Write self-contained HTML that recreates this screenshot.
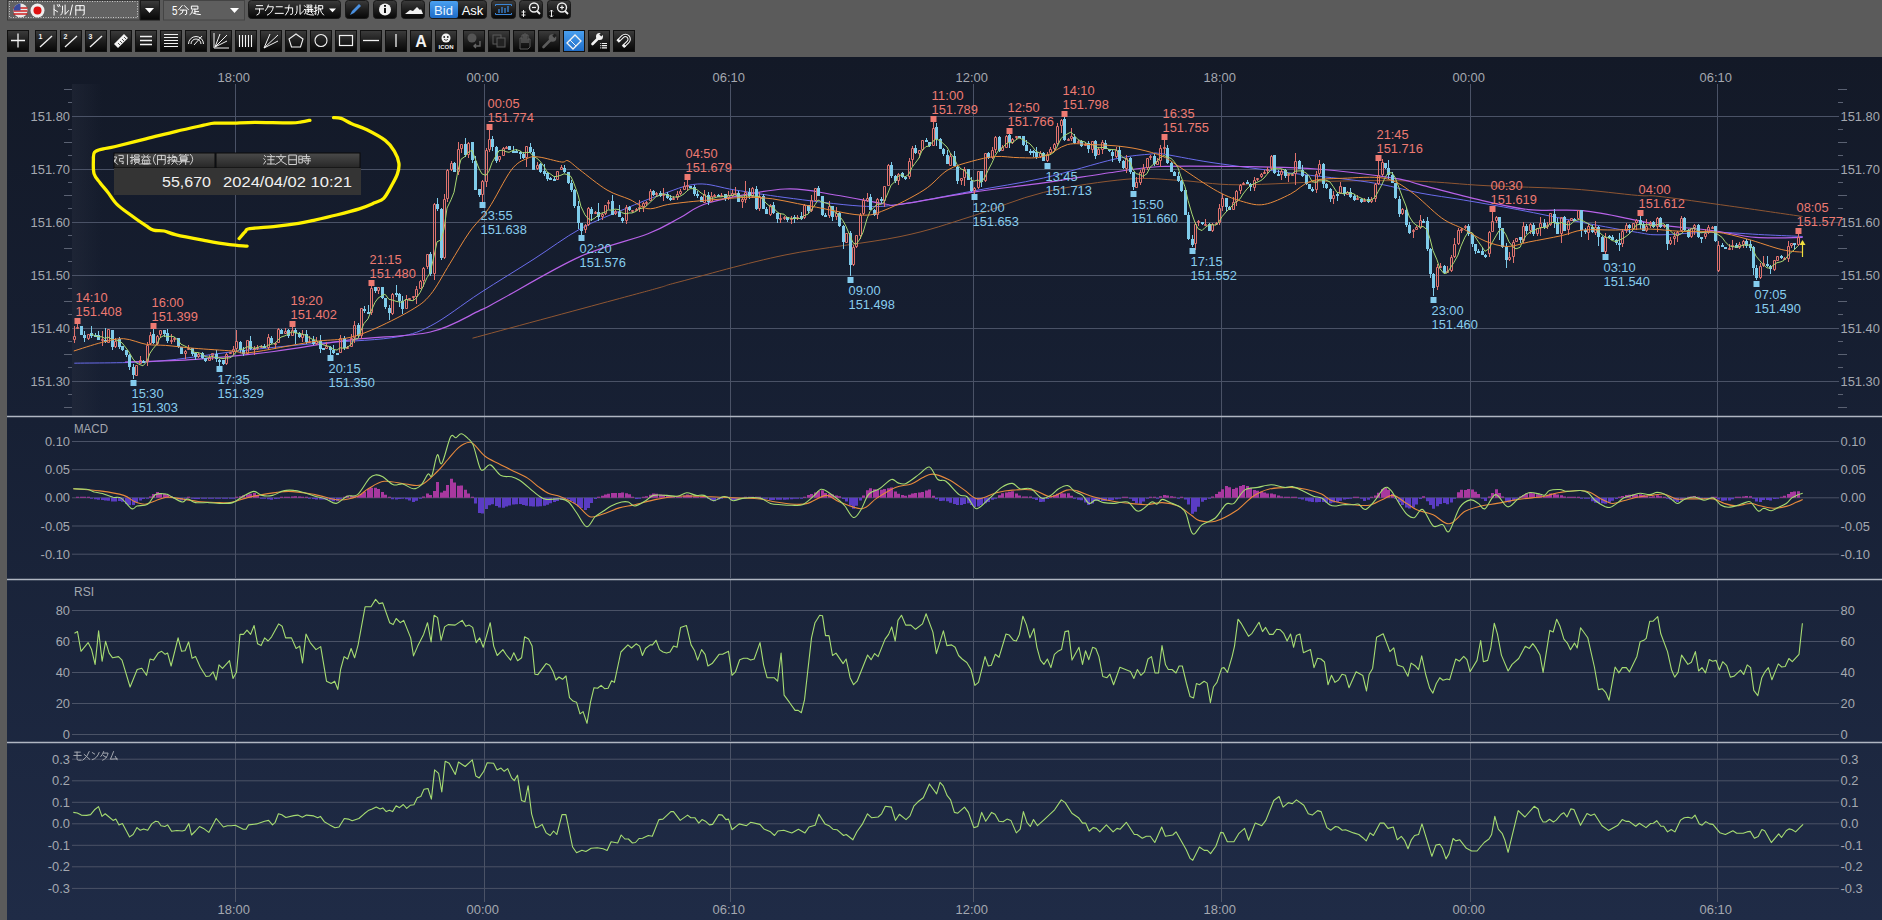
<!DOCTYPE html><html><head><meta charset="utf-8"><style>
html,body{margin:0;padding:0;width:1882px;height:920px;overflow:hidden;background:#5b5b5b;font-family:'Liberation Sans', sans-serif;}
svg{position:absolute;left:0;top:0;display:block}
</style></head><body>
<svg width="1882" height="920" viewBox="0 0 1882 920" font-family="'Liberation Sans', sans-serif">
<defs>
<linearGradient id="bg" x1="0" y1="57" x2="0" y2="920" gradientUnits="userSpaceOnUse">
<stop offset="0" stop-color="#131927"/><stop offset="0.42" stop-color="#172034"/><stop offset="1" stop-color="#1f2b46"/></linearGradient>
<linearGradient id="btn" x1="0" y1="0" x2="0" y2="1"><stop offset="0" stop-color="#3c3c3c"/><stop offset="0.5" stop-color="#1e1e1e"/><stop offset="1" stop-color="#060606"/></linearGradient>
<linearGradient id="btnb" x1="0" y1="0" x2="0" y2="1"><stop offset="0" stop-color="#4aa0f0"/><stop offset="1" stop-color="#1e6cc8"/></linearGradient>
<linearGradient id="hdr" x1="0" y1="0" x2="0" y2="1"><stop offset="0" stop-color="#4a4a4a"/><stop offset="1" stop-color="#262626"/></linearGradient>
<linearGradient id="dim" x1="0" y1="0" x2="1" y2="0"><stop offset="0" stop-color="#2a3040" stop-opacity="0.4"/><stop offset="1" stop-color="#2a3040" stop-opacity="0"/></linearGradient>
</defs>

<rect x="0" y="0" width="1882" height="57" fill="#5b5b5b"/>
<rect x="0" y="57" width="7" height="863" fill="#5b5b5b"/>
<rect x="7" y="57" width="1875" height="863" fill="url(#bg)"/>
<rect x="72" y="84" width="30" height="332" fill="url(#dim)"/>
<path d="M72,116.5H1839 M72,169.5H1839 M72,222.5H1839 M72,275.5H1839 M72,328.5H1839 M72,381.5H1839 M235.5,84V416 M484.5,84V416 M730.5,84V416 M973.5,84V416 M1221.5,84V416 M1470.5,84V416 M1717.5,84V416 M72,441.5H1839 M72,469.7H1839 M72,497.8H1839 M72,526.0H1839 M72,554.2H1839 M72,610.5H1839 M72,641.5H1839 M72,672.5H1839 M72,703.5H1839 M72,734.5H1839 M72,759.2H1839 M72,780.8H1839 M72,802.3H1839 M72,823.8H1839 M72,845.3H1839 M72,866.8H1839 M72,888.4H1839 M235.5,417V578 M235.5,580V741 M235.5,743V902 M484.5,417V578 M484.5,580V741 M484.5,743V902 M730.5,417V578 M730.5,580V741 M730.5,743V902 M973.5,417V578 M973.5,580V741 M973.5,743V902 M1221.5,417V578 M1221.5,580V741 M1221.5,743V902 M1470.5,417V578 M1470.5,580V741 M1470.5,743V902 M1717.5,417V578 M1717.5,580V741 M1717.5,743V902" stroke="#4a5266" stroke-width="1" fill="none"/>
<path d="M64,89.5H72 M1838,89.5H1847 M68,102.5H72 M1838,102.5H1843 M68,129.5H72 M1838,129.5H1843 M64,142.5H72 M1838,142.5H1847 M68,155.5H72 M1838,155.5H1843 M68,182.5H72 M1838,182.5H1843 M64,195.5H72 M1838,195.5H1847 M68,208.5H72 M1838,208.5H1843 M68,235.5H72 M1838,235.5H1843 M64,248.5H72 M1838,248.5H1847 M68,261.5H72 M1838,261.5H1843 M68,288.5H72 M1838,288.5H1843 M64,301.5H72 M1838,301.5H1847 M68,314.5H72 M1838,314.5H1843 M68,341.5H72 M1838,341.5H1843 M64,354.5H72 M1838,354.5H1847 M68,367.5H72 M1838,367.5H1843 M68,394.5H72 M1838,394.5H1843 M64,407.5H72 M1838,407.5H1847" stroke="#5a6172" stroke-width="1" fill="none"/>
<path d="M7,416.5H1882 M7,579.5H1882 M7,742.5H1882" stroke="#b0b6c2" stroke-width="1.3" fill="none"/>
<text x="70" y="120.5" text-anchor="end" fill="#a4a8b0" font-size="12" textLength="39.4" lengthAdjust="spacingAndGlyphs" >151.80</text>
<text x="1840.5" y="120.5" text-anchor="start" fill="#a4a8b0" font-size="12" textLength="39.4" lengthAdjust="spacingAndGlyphs" >151.80</text>
<text x="70" y="173.5" text-anchor="end" fill="#a4a8b0" font-size="12" textLength="39.4" lengthAdjust="spacingAndGlyphs" >151.70</text>
<text x="1840.5" y="173.5" text-anchor="start" fill="#a4a8b0" font-size="12" textLength="39.4" lengthAdjust="spacingAndGlyphs" >151.70</text>
<text x="70" y="226.5" text-anchor="end" fill="#a4a8b0" font-size="12" textLength="39.4" lengthAdjust="spacingAndGlyphs" >151.60</text>
<text x="1840.5" y="226.5" text-anchor="start" fill="#a4a8b0" font-size="12" textLength="39.4" lengthAdjust="spacingAndGlyphs" >151.60</text>
<text x="70" y="279.5" text-anchor="end" fill="#a4a8b0" font-size="12" textLength="39.4" lengthAdjust="spacingAndGlyphs" >151.50</text>
<text x="1840.5" y="279.5" text-anchor="start" fill="#a4a8b0" font-size="12" textLength="39.4" lengthAdjust="spacingAndGlyphs" >151.50</text>
<text x="70" y="332.5" text-anchor="end" fill="#a4a8b0" font-size="12" textLength="39.4" lengthAdjust="spacingAndGlyphs" >151.40</text>
<text x="1840.5" y="332.5" text-anchor="start" fill="#a4a8b0" font-size="12" textLength="39.4" lengthAdjust="spacingAndGlyphs" >151.40</text>
<text x="70" y="385.5" text-anchor="end" fill="#a4a8b0" font-size="12" textLength="39.4" lengthAdjust="spacingAndGlyphs" >151.30</text>
<text x="1840.5" y="385.5" text-anchor="start" fill="#a4a8b0" font-size="12" textLength="39.4" lengthAdjust="spacingAndGlyphs" >151.30</text>
<text x="70" y="446.0" text-anchor="end" fill="#a4a8b0" font-size="12" textLength="25.1" lengthAdjust="spacingAndGlyphs" >0.10</text>
<text x="1840.5" y="446.0" text-anchor="start" fill="#a4a8b0" font-size="12" textLength="25.1" lengthAdjust="spacingAndGlyphs" >0.10</text>
<text x="70" y="474.2" text-anchor="end" fill="#a4a8b0" font-size="12" textLength="25.1" lengthAdjust="spacingAndGlyphs" >0.05</text>
<text x="1840.5" y="474.2" text-anchor="start" fill="#a4a8b0" font-size="12" textLength="25.1" lengthAdjust="spacingAndGlyphs" >0.05</text>
<text x="70" y="502.3" text-anchor="end" fill="#a4a8b0" font-size="12" textLength="25.1" lengthAdjust="spacingAndGlyphs" >0.00</text>
<text x="1840.5" y="502.3" text-anchor="start" fill="#a4a8b0" font-size="12" textLength="25.1" lengthAdjust="spacingAndGlyphs" >0.00</text>
<text x="70" y="530.5" text-anchor="end" fill="#a4a8b0" font-size="12" textLength="29.4" lengthAdjust="spacingAndGlyphs" >-0.05</text>
<text x="1840.5" y="530.5" text-anchor="start" fill="#a4a8b0" font-size="12" textLength="29.4" lengthAdjust="spacingAndGlyphs" >-0.05</text>
<text x="70" y="558.7" text-anchor="end" fill="#a4a8b0" font-size="12" textLength="29.4" lengthAdjust="spacingAndGlyphs" >-0.10</text>
<text x="1840.5" y="558.7" text-anchor="start" fill="#a4a8b0" font-size="12" textLength="29.4" lengthAdjust="spacingAndGlyphs" >-0.10</text>
<text x="70" y="614.5" text-anchor="end" fill="#a4a8b0" font-size="12" textLength="14.3" lengthAdjust="spacingAndGlyphs" >80</text>
<text x="1840.5" y="614.5" text-anchor="start" fill="#a4a8b0" font-size="12" textLength="14.3" lengthAdjust="spacingAndGlyphs" >80</text>
<text x="70" y="645.5" text-anchor="end" fill="#a4a8b0" font-size="12" textLength="14.3" lengthAdjust="spacingAndGlyphs" >60</text>
<text x="1840.5" y="645.5" text-anchor="start" fill="#a4a8b0" font-size="12" textLength="14.3" lengthAdjust="spacingAndGlyphs" >60</text>
<text x="70" y="676.5" text-anchor="end" fill="#a4a8b0" font-size="12" textLength="14.3" lengthAdjust="spacingAndGlyphs" >40</text>
<text x="1840.5" y="676.5" text-anchor="start" fill="#a4a8b0" font-size="12" textLength="14.3" lengthAdjust="spacingAndGlyphs" >40</text>
<text x="70" y="707.5" text-anchor="end" fill="#a4a8b0" font-size="12" textLength="14.3" lengthAdjust="spacingAndGlyphs" >20</text>
<text x="1840.5" y="707.5" text-anchor="start" fill="#a4a8b0" font-size="12" textLength="14.3" lengthAdjust="spacingAndGlyphs" >20</text>
<text x="70" y="738.5" text-anchor="end" fill="#a4a8b0" font-size="12" textLength="7.2" lengthAdjust="spacingAndGlyphs" >0</text>
<text x="1840.5" y="738.5" text-anchor="start" fill="#a4a8b0" font-size="12" textLength="7.2" lengthAdjust="spacingAndGlyphs" >0</text>
<text x="70" y="763.7" text-anchor="end" fill="#a4a8b0" font-size="12" textLength="17.9" lengthAdjust="spacingAndGlyphs" >0.3</text>
<text x="1840.5" y="763.7" text-anchor="start" fill="#a4a8b0" font-size="12" textLength="17.9" lengthAdjust="spacingAndGlyphs" >0.3</text>
<text x="70" y="785.3" text-anchor="end" fill="#a4a8b0" font-size="12" textLength="17.9" lengthAdjust="spacingAndGlyphs" >0.2</text>
<text x="1840.5" y="785.3" text-anchor="start" fill="#a4a8b0" font-size="12" textLength="17.9" lengthAdjust="spacingAndGlyphs" >0.2</text>
<text x="70" y="806.8" text-anchor="end" fill="#a4a8b0" font-size="12" textLength="17.9" lengthAdjust="spacingAndGlyphs" >0.1</text>
<text x="1840.5" y="806.8" text-anchor="start" fill="#a4a8b0" font-size="12" textLength="17.9" lengthAdjust="spacingAndGlyphs" >0.1</text>
<text x="70" y="828.3" text-anchor="end" fill="#a4a8b0" font-size="12" textLength="17.9" lengthAdjust="spacingAndGlyphs" >0.0</text>
<text x="1840.5" y="828.3" text-anchor="start" fill="#a4a8b0" font-size="12" textLength="17.9" lengthAdjust="spacingAndGlyphs" >0.0</text>
<text x="70" y="849.8" text-anchor="end" fill="#a4a8b0" font-size="12" textLength="22.2" lengthAdjust="spacingAndGlyphs" >-0.1</text>
<text x="1840.5" y="849.8" text-anchor="start" fill="#a4a8b0" font-size="12" textLength="22.2" lengthAdjust="spacingAndGlyphs" >-0.1</text>
<text x="70" y="871.3" text-anchor="end" fill="#a4a8b0" font-size="12" textLength="22.2" lengthAdjust="spacingAndGlyphs" >-0.2</text>
<text x="1840.5" y="871.3" text-anchor="start" fill="#a4a8b0" font-size="12" textLength="22.2" lengthAdjust="spacingAndGlyphs" >-0.2</text>
<text x="70" y="892.9" text-anchor="end" fill="#a4a8b0" font-size="12" textLength="22.2" lengthAdjust="spacingAndGlyphs" >-0.3</text>
<text x="1840.5" y="892.9" text-anchor="start" fill="#a4a8b0" font-size="12" textLength="22.2" lengthAdjust="spacingAndGlyphs" >-0.3</text>
<text x="233.7" y="81.5" text-anchor="middle" fill="#a4a8b0" font-size="12" textLength="32.3" lengthAdjust="spacingAndGlyphs" >18:00</text>
<text x="233.7" y="913.5" text-anchor="middle" fill="#a4a8b0" font-size="12" textLength="32.3" lengthAdjust="spacingAndGlyphs" >18:00</text>
<text x="482.7" y="81.5" text-anchor="middle" fill="#a4a8b0" font-size="12" textLength="32.3" lengthAdjust="spacingAndGlyphs" >00:00</text>
<text x="482.7" y="913.5" text-anchor="middle" fill="#a4a8b0" font-size="12" textLength="32.3" lengthAdjust="spacingAndGlyphs" >00:00</text>
<text x="728.7" y="81.5" text-anchor="middle" fill="#a4a8b0" font-size="12" textLength="32.3" lengthAdjust="spacingAndGlyphs" >06:10</text>
<text x="728.7" y="913.5" text-anchor="middle" fill="#a4a8b0" font-size="12" textLength="32.3" lengthAdjust="spacingAndGlyphs" >06:10</text>
<text x="971.7" y="81.5" text-anchor="middle" fill="#a4a8b0" font-size="12" textLength="32.3" lengthAdjust="spacingAndGlyphs" >12:00</text>
<text x="971.7" y="913.5" text-anchor="middle" fill="#a4a8b0" font-size="12" textLength="32.3" lengthAdjust="spacingAndGlyphs" >12:00</text>
<text x="1219.7" y="81.5" text-anchor="middle" fill="#a4a8b0" font-size="12" textLength="32.3" lengthAdjust="spacingAndGlyphs" >18:00</text>
<text x="1219.7" y="913.5" text-anchor="middle" fill="#a4a8b0" font-size="12" textLength="32.3" lengthAdjust="spacingAndGlyphs" >18:00</text>
<text x="1468.7" y="81.5" text-anchor="middle" fill="#a4a8b0" font-size="12" textLength="32.3" lengthAdjust="spacingAndGlyphs" >00:00</text>
<text x="1468.7" y="913.5" text-anchor="middle" fill="#a4a8b0" font-size="12" textLength="32.3" lengthAdjust="spacingAndGlyphs" >00:00</text>
<text x="1715.7" y="81.5" text-anchor="middle" fill="#a4a8b0" font-size="12" textLength="32.3" lengthAdjust="spacingAndGlyphs" >06:10</text>
<text x="1715.7" y="913.5" text-anchor="middle" fill="#a4a8b0" font-size="12" textLength="32.3" lengthAdjust="spacingAndGlyphs" >06:10</text>
<text x="74" y="433" fill="#a4a8b0" font-size="12" textLength="34" lengthAdjust="spacingAndGlyphs">MACD</text><text x="74" y="596" fill="#a4a8b0" font-size="12" textLength="20" lengthAdjust="spacingAndGlyphs">RSI</text>
<g fill="none" stroke="#a4a8b0" stroke-width="1.0" stroke-linecap="square" ><path transform="translate(73.00,750.70) scale(0.900,0.950)" d="M2,1.5H8 M1,5H9 M4.5,1.5V8.5Q4.5,10 6,10H9" vector-effect="non-scaling-stroke"/><path transform="translate(82.00,750.70) scale(0.900,0.950)" d="M8,1Q6,7 1,10 M2.5,4L8.5,9" vector-effect="non-scaling-stroke"/><path transform="translate(91.00,750.70) scale(0.900,0.950)" d="M1.5,2L4,3.5 M1.5,9.5Q7,8 9,2" vector-effect="non-scaling-stroke"/><path transform="translate(100.00,750.70) scale(0.900,0.950)" d="M4,1Q3,4 1,6 M4,2.5H9Q8,8 3,10 M3.5,5L7,7" vector-effect="non-scaling-stroke"/><path transform="translate(109.00,750.70) scale(0.900,0.950)" d="M5,1Q3,6 1.5,9L9,8.5 M7,6L9,9.5" vector-effect="non-scaling-stroke"/></g>
<path d="M472.5,338.2 C496.1,331.8 582.8,308.4 614.0,300.0 C645.2,291.6 649.0,290.6 660.0,287.5 C671.0,284.4 659.2,287.1 680.0,281.7 C700.8,276.3 748.3,262.5 785.0,255.0 C821.7,247.5 868.9,243.0 900.0,236.6 C931.1,230.2 947.8,223.7 971.7,216.3 C995.6,208.9 1017.6,198.6 1043.5,192.4 C1069.4,186.2 1104.2,181.2 1127.0,179.2 C1149.8,177.2 1161.5,179.5 1180.0,180.4 C1198.5,181.3 1210.9,184.7 1238.0,184.8 C1265.1,184.9 1312.4,181.6 1342.7,181.0 C1373.0,180.4 1396.3,180.5 1420.0,181.3 C1443.7,182.1 1459.7,184.3 1485.0,185.6 C1510.3,186.9 1546.6,187.4 1572.0,189.0 C1597.4,190.6 1622.7,194.2 1637.4,195.4 C1652.1,196.7 1644.6,194.7 1660.0,196.5 C1675.4,198.3 1705.8,202.7 1729.6,206.0 C1753.4,209.3 1790.5,214.8 1802.7,216.5" stroke="#8f5632" stroke-width="1.0" fill="none"/>
<path d="M74.3,363.2 C88.0,362.9 129.8,363.2 156.5,361.3 C183.2,359.4 208.6,354.4 234.7,351.5 C260.8,348.6 286.9,345.9 313.0,343.6 C339.1,341.3 371.6,340.7 391.2,337.8 C410.8,334.9 415.6,333.5 430.4,326.0 C445.2,318.5 462.7,304.2 480.0,293.0 C497.3,281.8 517.3,269.7 534.0,259.0 C550.7,248.3 564.8,237.4 580.0,229.0 C595.2,220.6 612.1,214.4 625.4,208.7 C638.7,203.0 648.0,199.1 660.0,195.0 C672.0,190.9 685.0,184.8 697.5,184.0 C710.0,183.2 720.4,187.8 735.0,190.0 C749.6,192.2 764.2,194.8 785.0,197.5 C805.8,200.2 840.8,204.9 860.0,206.0 C879.2,207.1 881.4,206.8 900.0,204.3 C918.6,201.8 947.8,195.6 971.7,191.2 C995.6,186.8 1019.6,183.4 1043.5,178.0 C1067.4,172.6 1097.1,163.0 1115.0,159.0 C1132.9,155.0 1143.5,154.9 1151.0,154.0 C1158.5,153.1 1149.8,152.1 1160.0,153.5 C1170.2,154.9 1190.2,159.3 1212.0,162.6 C1233.8,165.8 1264.4,169.7 1290.5,173.0 C1316.6,176.3 1347.2,178.9 1368.8,182.2 C1390.4,185.5 1404.2,190.0 1420.0,193.0 C1435.8,196.0 1447.2,197.2 1463.5,200.0 C1479.8,202.8 1497.9,205.8 1517.8,209.6 C1537.7,213.4 1563.1,218.8 1583.0,222.6 C1602.9,226.4 1624.6,230.4 1637.4,232.4 C1650.2,234.4 1647.6,234.8 1660.0,234.8 C1672.4,234.8 1694.6,232.2 1712.0,232.2 C1729.4,232.2 1749.3,234.1 1764.4,234.8 C1779.5,235.5 1796.3,236.2 1802.7,236.5" stroke="#6a6cec" stroke-width="1.0" fill="none"/>
<path d="M125.0,362.0 C136.8,361.6 170.8,361.1 195.6,359.3 C220.4,357.6 247.8,354.8 273.9,351.5 C300.0,348.2 325.9,342.9 352.0,339.7 C378.1,336.4 409.1,336.9 430.4,332.0 C451.7,327.1 468.4,315.7 480.0,310.4 C491.6,305.1 483.3,309.0 500.0,300.0 C516.7,291.0 555.3,267.6 580.0,256.6 C604.7,245.6 631.3,240.3 648.0,233.8 C664.7,227.3 669.7,223.0 680.0,217.8 C690.3,212.6 692.5,207.3 710.0,202.5 C727.5,197.7 764.2,190.2 785.0,189.0 C805.8,187.8 818.3,192.5 835.0,195.0 C851.7,197.5 874.2,202.4 885.0,204.0 C895.8,205.6 885.5,206.2 900.0,204.3 C914.5,202.4 947.8,196.0 971.7,192.4 C995.6,188.8 1019.6,186.2 1043.5,182.8 C1067.4,179.4 1095.6,174.7 1115.0,172.0 C1134.4,169.3 1139.5,167.4 1160.0,166.5 C1180.5,165.6 1211.9,166.1 1238.0,166.5 C1264.1,166.9 1290.4,167.0 1316.6,169.0 C1342.8,171.0 1377.8,175.7 1395.0,178.3 C1412.2,180.9 1406.8,181.2 1420.0,184.6 C1433.2,188.0 1456.2,194.5 1474.3,198.7 C1492.4,202.9 1510.6,207.6 1528.7,209.6 C1546.8,211.6 1564.9,208.9 1583.0,210.7 C1601.1,212.5 1624.6,218.0 1637.4,220.4 C1650.2,222.8 1647.6,223.5 1660.0,225.2 C1672.4,226.9 1696.0,228.5 1712.0,230.5 C1728.0,232.5 1740.6,236.2 1755.7,237.4 C1770.8,238.6 1794.9,237.4 1802.7,237.4" stroke="#b862e8" stroke-width="1.2" fill="none"/>
<path d="M77.5,324V327 M77.5,329V328 M88.5,334V334 M88.5,339V340 M102.5,331V339 M102.5,341V346 M108.5,329V329 M108.5,343V343 M115.5,338V341 M115.5,347V348 M136.5,365V365 M136.5,376V376 M140.5,356V360 M140.5,364V364 M147.5,342V345 M147.5,362V366 M150.5,332V335 M150.5,344V345 M157.5,335V336 M157.5,344V345 M160.5,330V330 M160.5,335V337 M171.5,334V340 M171.5,342V344 M174.5,337V338 M174.5,340V342 M185.5,350V351 M185.5,354V359 M188.5,345V348 M188.5,350V350 M198.5,353V354 M198.5,357V358 M209.5,355V357 M209.5,361V361 M212.5,353V353 M212.5,356V360 M226.5,353V354 M226.5,364V365 M230.5,352V352 M230.5,354V354 M233.5,346V349 M233.5,352V355 M236.5,330V341 M236.5,349V351 M247.5,340V340 M247.5,354V354 M254.5,346V348 M254.5,350V355 M257.5,345V347 M257.5,349V350 M261.5,345V346 M261.5,348V348 M268.5,334V337 M268.5,348V350 M275.5,342V343 M275.5,345V349 M278.5,328V329 M278.5,343V343 M285.5,328V331 M285.5,334V334 M292.5,327V330 M292.5,336V336 M302.5,330V334 M302.5,338V342 M309.5,336V341 M309.5,343V343 M316.5,337V341 M316.5,344V345 M326.5,342V346 M326.5,349V349 M340.5,335V338 M340.5,353V353 M347.5,346V347 M347.5,349V348 M351.5,334V338 M351.5,347V347 M354.5,321V325 M354.5,338V343 M361.5,308V308 M361.5,336V339 M371.5,286V288 M371.5,313V315 M378.5,287V287 M378.5,291V294 M392.5,293V294 M392.5,314V315 M406.5,295V299 M406.5,309V309 M409.5,298V298 M409.5,300V300 M413.5,296V296 M413.5,298V300 M416.5,286V289 M416.5,297V304 M420.5,280V281 M420.5,289V289 M423.5,267V268 M423.5,281V287 M427.5,254V254 M427.5,267V269 M434.5,203V204 M434.5,274V280 M444.5,194V199 M444.5,258V259 M447.5,169V170 M447.5,199V202 M451.5,161V163 M451.5,170V171 M458.5,142V149 M458.5,172V175 M461.5,144V144 M461.5,149V153 M468.5,142V143 M468.5,155V158 M482.5,180V181 M482.5,195V202 M486.5,148V150 M486.5,182V187 M489.5,130V139 M489.5,150V152 M499.5,156V156 M499.5,160V162 M503.5,147V148 M503.5,156V156 M506.5,146V147 M506.5,149V149 M526.5,146V146 M526.5,158V167 M537.5,162V165 M537.5,169V170 M557.5,171V171 M557.5,180V180 M561.5,165V167 M561.5,170V170 M585.5,224V225 M585.5,230V233 M588.5,207V208 M588.5,225V226 M595.5,211V212 M595.5,214V214 M602.5,213V214 M602.5,217V220 M605.5,205V205 M605.5,214V215 M608.5,200V202 M608.5,204V209 M615.5,210V211 M615.5,214V215 M626.5,205V207 M626.5,221V224 M632.5,210V210 M632.5,212V213 M636.5,208V209 M636.5,211V210 M639.5,200V207 M639.5,209V212 M643.5,202V203 M643.5,207V212 M646.5,201V202 M646.5,204V206 M650.5,189V191 M650.5,201V201 M656.5,192V193 M656.5,195V197 M663.5,188V194 M663.5,196V201 M673.5,196V198 M673.5,200V200 M677.5,191V194 M677.5,198V200 M680.5,189V191 M680.5,194V195 M684.5,182V186 M684.5,190V190 M687.5,180V185 M687.5,187V190 M704.5,190V194 M704.5,203V203 M711.5,192V196 M711.5,202V202 M714.5,194V195 M714.5,197V197 M721.5,193V195 M721.5,197V197 M728.5,191V195 M728.5,198V200 M732.5,190V193 M732.5,196V197 M735.5,187V193 M735.5,195V195 M742.5,197V199 M742.5,202V208 M745.5,181V192 M745.5,200V203 M752.5,187V188 M752.5,197V198 M759.5,192V196 M759.5,209V211 M770.5,204V205 M770.5,215V216 M780.5,213V218 M780.5,220V223 M784.5,216V217 M784.5,219V220 M791.5,216V218 M791.5,220V224 M797.5,215V217 M797.5,219V220 M804.5,204V205 M804.5,218V219 M811.5,195V200 M811.5,211V212 M815.5,188V188 M815.5,201V201 M829.5,201V206 M829.5,216V218 M836.5,207V213 M836.5,217V220 M846.5,233V233 M846.5,243V243 M853.5,245V247 M853.5,265V266 M856.5,235V235 M856.5,247V248 M860.5,213V215 M860.5,236V239 M863.5,198V200 M863.5,214V215 M867.5,193V198 M867.5,201V202 M877.5,198V199 M877.5,215V219 M884.5,186V186 M884.5,201V207 M888.5,164V165 M888.5,186V186 M898.5,173V174 M898.5,181V185 M909.5,158V161 M909.5,177V179 M912.5,146V148 M912.5,160V166 M919.5,150V150 M919.5,154V158 M922.5,140V140 M922.5,150V151 M933.5,122V128 M933.5,146V146 M950.5,153V156 M950.5,166V166 M961.5,178V178 M961.5,181V185 M964.5,167V169 M964.5,178V186 M974.5,187V188 M974.5,191V194 M978.5,171V171 M978.5,188V189 M985.5,153V153 M985.5,181V182 M992.5,147V150 M992.5,158V159 M995.5,136V137 M995.5,150V153 M1002.5,145V147 M1002.5,151V151 M1006.5,135V136 M1006.5,148V148 M1012.5,138V139 M1012.5,143V144 M1016.5,136V136 M1016.5,138V139 M1040.5,151V153 M1040.5,157V158 M1047.5,152V154 M1047.5,161V162 M1050.5,147V149 M1050.5,153V155 M1054.5,143V144 M1054.5,149V152 M1057.5,123V126 M1057.5,144V146 M1061.5,119V120 M1061.5,126V133 M1068.5,138V139 M1068.5,141V140 M1071.5,128V136 M1071.5,139V141 M1078.5,140V141 M1078.5,143V142 M1085.5,143V144 M1085.5,146V146 M1092.5,141V141 M1092.5,150V153 M1098.5,147V149 M1098.5,155V155 M1102.5,140V142 M1102.5,150V154 M1116.5,147V150 M1116.5,157V158 M1126.5,155V158 M1126.5,169V173 M1136.5,177V182 M1136.5,188V188 M1140.5,170V172 M1140.5,183V185 M1143.5,164V168 M1143.5,173V178 M1147.5,158V158 M1147.5,168V170 M1150.5,155V156 M1150.5,158V160 M1157.5,158V161 M1157.5,165V165 M1160.5,145V148 M1160.5,161V167 M1164.5,140V147 M1164.5,149V154 M1195.5,222V224 M1195.5,244V250 M1198.5,220V221 M1198.5,223V226 M1205.5,219V224 M1205.5,226V224 M1212.5,223V224 M1212.5,231V232 M1216.5,222V223 M1216.5,225V224 M1219.5,204V208 M1219.5,223V225 M1222.5,194V198 M1222.5,207V211 M1233.5,197V202 M1233.5,210V210 M1236.5,190V191 M1236.5,202V206 M1240.5,184V185 M1240.5,191V194 M1243.5,182V183 M1243.5,185V184 M1254.5,177V180 M1254.5,188V191 M1257.5,178V178 M1257.5,180V181 M1261.5,173V174 M1261.5,177V178 M1264.5,170V172 M1264.5,174V173 M1267.5,167V169 M1267.5,171V174 M1271.5,155V156 M1271.5,169V169 M1281.5,169V171 M1281.5,175V180 M1288.5,174V174 M1288.5,176V182 M1292.5,173V174 M1292.5,176V176 M1295.5,153V161 M1295.5,174V185 M1316.5,171V174 M1316.5,190V193 M1319.5,160V164 M1319.5,174V176 M1333.5,191V195 M1333.5,199V204 M1340.5,182V186 M1340.5,194V194 M1347.5,191V192 M1347.5,195V195 M1357.5,195V198 M1357.5,200V200 M1364.5,198V200 M1364.5,202V202 M1371.5,197V199 M1371.5,202V203 M1375.5,183V184 M1375.5,199V202 M1378.5,161V175 M1378.5,184V185 M1382.5,159V162 M1382.5,175V176 M1402.5,208V209 M1402.5,214V215 M1413.5,229V230 M1413.5,232V238 M1416.5,226V227 M1416.5,230V230 M1420.5,215V220 M1420.5,228V229 M1437.5,264V267 M1437.5,287V290 M1440.5,263V266 M1440.5,268V268 M1447.5,266V271 M1447.5,273V273 M1451.5,255V257 M1451.5,271V272 M1454.5,238V244 M1454.5,257V258 M1458.5,228V230 M1458.5,244V245 M1461.5,228V229 M1461.5,231V233 M1465.5,225V226 M1465.5,228V229 M1489.5,231V232 M1489.5,254V257 M1492.5,212V221 M1492.5,232V232 M1496.5,216V217 M1496.5,221V223 M1509.5,252V257 M1509.5,260V261 M1513.5,240V242 M1513.5,257V263 M1516.5,238V238 M1516.5,242V242 M1523.5,222V226 M1523.5,241V243 M1530.5,223V224 M1530.5,231V234 M1537.5,228V228 M1537.5,234V236 M1540.5,217V223 M1540.5,228V236 M1547.5,222V225 M1547.5,227V229 M1550.5,213V213 M1550.5,225V226 M1561.5,217V217 M1561.5,234V243 M1568.5,220V221 M1568.5,230V235 M1571.5,218V218 M1571.5,221V221 M1578.5,210V210 M1578.5,219V220 M1588.5,224V226 M1588.5,233V240 M1595.5,221V227 M1595.5,233V235 M1605.5,233V237 M1605.5,252V254 M1622.5,229V231 M1622.5,244V247 M1626.5,223V225 M1626.5,231V233 M1633.5,223V223 M1633.5,229V229 M1636.5,219V220 M1636.5,223V230 M1646.5,219V226 M1646.5,231V232 M1650.5,221V222 M1650.5,226V228 M1657.5,217V218 M1657.5,227V232 M1664.5,225V225 M1664.5,227V228 M1670.5,237V240 M1670.5,244V245 M1674.5,232V236 M1674.5,239V245 M1677.5,231V232 M1677.5,236V242 M1681.5,216V218 M1681.5,231V232 M1691.5,228V228 M1691.5,237V238 M1694.5,224V225 M1694.5,228V235 M1705.5,229V233 M1705.5,237V239 M1708.5,225V227 M1708.5,233V234 M1712.5,226V227 M1712.5,229V228 M1718.5,241V245 M1718.5,271V272 M1729.5,244V248 M1729.5,250V249 M1732.5,240V245 M1732.5,247V250 M1739.5,242V244 M1739.5,248V249 M1743.5,240V241 M1743.5,245V248 M1760.5,263V266 M1760.5,278V279 M1763.5,256V263 M1763.5,266V267 M1774.5,260V260 M1774.5,270V271 M1777.5,256V256 M1777.5,261V261 M1784.5,257V258 M1784.5,260V259 M1788.5,241V246 M1788.5,259V262 M1791.5,243V243 M1791.5,246V248 M1798.5,234V237 M1798.5,245V246 M74.5,326V336 M74.5,340V343" stroke="#e0736e" stroke-width="1" fill="none"/>
<path d="M76.5,327.5h2v1.0h-2z M87.5,334.5h2v4.0h-2z M101.5,339.5h2v1.0h-2z M107.5,329.5h2v13.0h-2z M114.5,341.5h2v5.0h-2z M135.5,365.5h2v10.0h-2z M139.5,360.5h2v3.0h-2z M146.5,345.5h2v16.0h-2z M149.5,335.5h2v8.0h-2z M156.5,336.5h2v7.0h-2z M159.5,330.5h2v4.0h-2z M170.5,340.5h2v1.0h-2z M173.5,338.5h2v1.0h-2z M184.5,351.5h2v2.0h-2z M187.5,348.5h2v1.0h-2z M197.5,354.5h2v2.0h-2z M208.5,357.5h2v3.0h-2z M211.5,353.5h2v2.0h-2z M225.5,354.5h2v9.0h-2z M229.5,352.5h2v1.0h-2z M232.5,349.5h2v2.0h-2z M235.5,341.5h2v7.0h-2z M246.5,340.5h2v13.0h-2z M253.5,348.5h2v1.0h-2z M256.5,347.5h2v1.0h-2z M260.5,346.5h2v1.0h-2z M267.5,337.5h2v10.0h-2z M274.5,343.5h2v1.0h-2z M277.5,329.5h2v13.0h-2z M284.5,331.5h2v2.0h-2z M291.5,330.5h2v5.0h-2z M301.5,334.5h2v3.0h-2z M308.5,341.5h2v1.0h-2z M315.5,341.5h2v2.0h-2z M325.5,346.5h2v2.0h-2z M339.5,338.5h2v14.0h-2z M346.5,347.5h2v1.0h-2z M350.5,338.5h2v8.0h-2z M353.5,325.5h2v12.0h-2z M360.5,308.5h2v27.0h-2z M370.5,288.5h2v24.0h-2z M377.5,287.5h2v3.0h-2z M391.5,294.5h2v19.0h-2z M405.5,299.5h2v9.0h-2z M408.5,298.5h2v1.0h-2z M412.5,296.5h2v1.0h-2z M415.5,289.5h2v7.0h-2z M419.5,281.5h2v7.0h-2z M422.5,268.5h2v12.0h-2z M426.5,254.5h2v12.0h-2z M433.5,204.5h2v69.0h-2z M443.5,199.5h2v58.0h-2z M446.5,170.5h2v28.0h-2z M450.5,163.5h2v6.0h-2z M457.5,149.5h2v22.0h-2z M460.5,144.5h2v4.0h-2z M467.5,143.5h2v11.0h-2z M481.5,181.5h2v13.0h-2z M485.5,150.5h2v31.0h-2z M488.5,139.5h2v10.0h-2z M498.5,156.5h2v3.0h-2z M502.5,148.5h2v7.0h-2z M505.5,147.5h2v1.0h-2z M525.5,146.5h2v11.0h-2z M536.5,165.5h2v3.0h-2z M556.5,171.5h2v8.0h-2z M560.5,167.5h2v2.0h-2z M584.5,225.5h2v4.0h-2z M587.5,208.5h2v16.0h-2z M594.5,212.5h2v1.0h-2z M601.5,214.5h2v2.0h-2z M604.5,205.5h2v8.0h-2z M607.5,202.5h2v1.0h-2z M614.5,211.5h2v2.0h-2z M625.5,207.5h2v13.0h-2z M631.5,210.5h2v1.0h-2z M635.5,209.5h2v1.0h-2z M638.5,207.5h2v1.0h-2z M642.5,203.5h2v3.0h-2z M645.5,202.5h2v1.0h-2z M649.5,191.5h2v9.0h-2z M655.5,193.5h2v1.0h-2z M662.5,194.5h2v1.0h-2z M672.5,198.5h2v1.0h-2z M676.5,194.5h2v3.0h-2z M679.5,191.5h2v2.0h-2z M683.5,186.5h2v3.0h-2z M686.5,185.5h2v1.0h-2z M703.5,194.5h2v8.0h-2z M710.5,196.5h2v5.0h-2z M713.5,195.5h2v1.0h-2z M720.5,195.5h2v1.0h-2z M727.5,195.5h2v2.0h-2z M731.5,193.5h2v2.0h-2z M734.5,193.5h2v1.0h-2z M741.5,199.5h2v2.0h-2z M744.5,192.5h2v7.0h-2z M751.5,188.5h2v8.0h-2z M758.5,196.5h2v12.0h-2z M769.5,205.5h2v9.0h-2z M779.5,218.5h2v1.0h-2z M783.5,217.5h2v1.0h-2z M790.5,218.5h2v1.0h-2z M796.5,217.5h2v1.0h-2z M803.5,205.5h2v12.0h-2z M810.5,200.5h2v10.0h-2z M814.5,188.5h2v12.0h-2z M828.5,206.5h2v9.0h-2z M835.5,213.5h2v3.0h-2z M845.5,233.5h2v9.0h-2z M852.5,247.5h2v17.0h-2z M855.5,235.5h2v11.0h-2z M859.5,215.5h2v20.0h-2z M862.5,200.5h2v13.0h-2z M866.5,198.5h2v2.0h-2z M876.5,199.5h2v15.0h-2z M883.5,186.5h2v14.0h-2z M887.5,165.5h2v20.0h-2z M897.5,174.5h2v6.0h-2z M908.5,161.5h2v15.0h-2z M911.5,148.5h2v11.0h-2z M918.5,150.5h2v3.0h-2z M921.5,140.5h2v9.0h-2z M932.5,128.5h2v17.0h-2z M949.5,156.5h2v9.0h-2z M960.5,178.5h2v2.0h-2z M963.5,169.5h2v8.0h-2z M973.5,188.5h2v2.0h-2z M977.5,171.5h2v16.0h-2z M984.5,153.5h2v27.0h-2z M991.5,150.5h2v7.0h-2z M994.5,137.5h2v12.0h-2z M1001.5,147.5h2v3.0h-2z M1005.5,136.5h2v11.0h-2z M1011.5,139.5h2v3.0h-2z M1015.5,136.5h2v1.0h-2z M1039.5,153.5h2v3.0h-2z M1046.5,154.5h2v6.0h-2z M1049.5,149.5h2v3.0h-2z M1053.5,144.5h2v4.0h-2z M1056.5,126.5h2v17.0h-2z M1060.5,120.5h2v5.0h-2z M1067.5,139.5h2v1.0h-2z M1070.5,136.5h2v2.0h-2z M1077.5,141.5h2v1.0h-2z M1084.5,144.5h2v1.0h-2z M1091.5,141.5h2v8.0h-2z M1097.5,149.5h2v5.0h-2z M1101.5,142.5h2v7.0h-2z M1115.5,150.5h2v6.0h-2z M1125.5,158.5h2v10.0h-2z M1135.5,182.5h2v5.0h-2z M1139.5,172.5h2v10.0h-2z M1142.5,168.5h2v4.0h-2z M1146.5,158.5h2v9.0h-2z M1149.5,156.5h2v1.0h-2z M1156.5,161.5h2v3.0h-2z M1159.5,148.5h2v12.0h-2z M1163.5,147.5h2v1.0h-2z M1194.5,224.5h2v19.0h-2z M1197.5,221.5h2v1.0h-2z M1204.5,224.5h2v1.0h-2z M1211.5,224.5h2v6.0h-2z M1215.5,223.5h2v1.0h-2z M1218.5,208.5h2v14.0h-2z M1221.5,198.5h2v8.0h-2z M1232.5,202.5h2v7.0h-2z M1235.5,191.5h2v10.0h-2z M1239.5,185.5h2v5.0h-2z M1242.5,183.5h2v1.0h-2z M1253.5,180.5h2v7.0h-2z M1256.5,178.5h2v1.0h-2z M1260.5,174.5h2v2.0h-2z M1263.5,172.5h2v1.0h-2z M1266.5,169.5h2v1.0h-2z M1270.5,156.5h2v12.0h-2z M1280.5,171.5h2v3.0h-2z M1287.5,174.5h2v1.0h-2z M1291.5,174.5h2v1.0h-2z M1294.5,161.5h2v12.0h-2z M1315.5,174.5h2v15.0h-2z M1318.5,164.5h2v9.0h-2z M1332.5,195.5h2v3.0h-2z M1339.5,186.5h2v7.0h-2z M1346.5,192.5h2v2.0h-2z M1356.5,198.5h2v1.0h-2z M1363.5,200.5h2v1.0h-2z M1370.5,199.5h2v2.0h-2z M1374.5,184.5h2v14.0h-2z M1377.5,175.5h2v8.0h-2z M1381.5,162.5h2v12.0h-2z M1401.5,209.5h2v4.0h-2z M1412.5,230.5h2v1.0h-2z M1415.5,227.5h2v2.0h-2z M1419.5,220.5h2v7.0h-2z M1436.5,267.5h2v19.0h-2z M1439.5,266.5h2v1.0h-2z M1446.5,271.5h2v1.0h-2z M1450.5,257.5h2v13.0h-2z M1453.5,244.5h2v12.0h-2z M1457.5,230.5h2v13.0h-2z M1460.5,229.5h2v1.0h-2z M1464.5,226.5h2v1.0h-2z M1488.5,232.5h2v21.0h-2z M1491.5,221.5h2v10.0h-2z M1495.5,217.5h2v3.0h-2z M1508.5,257.5h2v2.0h-2z M1512.5,242.5h2v14.0h-2z M1515.5,238.5h2v3.0h-2z M1522.5,226.5h2v14.0h-2z M1529.5,224.5h2v6.0h-2z M1536.5,228.5h2v5.0h-2z M1539.5,223.5h2v4.0h-2z M1546.5,225.5h2v1.0h-2z M1549.5,213.5h2v11.0h-2z M1560.5,217.5h2v16.0h-2z M1567.5,221.5h2v8.0h-2z M1570.5,218.5h2v2.0h-2z M1577.5,210.5h2v8.0h-2z M1587.5,226.5h2v6.0h-2z M1594.5,227.5h2v5.0h-2z M1604.5,237.5h2v14.0h-2z M1621.5,231.5h2v12.0h-2z M1625.5,225.5h2v5.0h-2z M1632.5,223.5h2v5.0h-2z M1635.5,220.5h2v2.0h-2z M1645.5,226.5h2v4.0h-2z M1649.5,222.5h2v3.0h-2z M1656.5,218.5h2v8.0h-2z M1663.5,225.5h2v1.0h-2z M1669.5,240.5h2v3.0h-2z M1673.5,236.5h2v2.0h-2z M1676.5,232.5h2v3.0h-2z M1680.5,218.5h2v12.0h-2z M1690.5,228.5h2v8.0h-2z M1693.5,225.5h2v2.0h-2z M1704.5,233.5h2v3.0h-2z M1707.5,227.5h2v5.0h-2z M1711.5,227.5h2v1.0h-2z M1717.5,245.5h2v25.0h-2z M1728.5,248.5h2v1.0h-2z M1731.5,245.5h2v1.0h-2z M1738.5,244.5h2v3.0h-2z M1742.5,241.5h2v3.0h-2z M1759.5,266.5h2v11.0h-2z M1762.5,263.5h2v2.0h-2z M1773.5,260.5h2v9.0h-2z M1776.5,256.5h2v4.0h-2z M1783.5,258.5h2v1.0h-2z M1787.5,246.5h2v12.0h-2z M1790.5,243.5h2v2.0h-2z M1797.5,237.5h2v7.0h-2z M73.5,336.5h2v3h-2z" stroke="#e0736e" stroke-width="1" fill="none"/>
<path d="M81.5,326V335 M84.5,331V342 M91.5,326V338 M95.5,333V336 M98.5,331V340 M105.5,328V343 M112.5,330V350 M119.5,337V349 M122.5,346V351 M126.5,350V357 M129.5,354V370 M133.5,364V379 M143.5,360V362 M153.5,329V344 M164.5,330V337 M167.5,329V343 M178.5,338V348 M181.5,347V354 M192.5,348V356 M195.5,352V360 M202.5,352V359 M205.5,358V362 M216.5,350V362 M219.5,359V366 M223.5,360V365 M240.5,341V353 M243.5,347V356 M250.5,336V350 M264.5,344V348 M271.5,336V344 M281.5,329V334 M288.5,329V338 M295.5,328V344 M299.5,332V338 M306.5,330V344 M313.5,336V345 M320.5,335V353 M323.5,348V349 M330.5,346V355 M333.5,345V354 M337.5,353V353 M344.5,336V350 M358.5,323V337 M364.5,306V313 M368.5,305V314 M375.5,287V293 M382.5,287V299 M385.5,298V309 M389.5,305V320 M396.5,285V297 M399.5,293V307 M402.5,296V314 M430.5,252V276 M437.5,198V211 M441.5,208V260 M454.5,162V172 M465.5,138V157 M472.5,142V163 M475.5,156V190 M479.5,189V197 M492.5,136V151 M496.5,146V163 M509.5,146V150 M513.5,146V153 M516.5,149V152 M520.5,151V159 M523.5,152V159 M530.5,143V153 M533.5,149V170 M540.5,163V173 M544.5,164V176 M547.5,172V181 M550.5,177V179 M554.5,177V181 M564.5,165V173 M568.5,172V184 M571.5,180V192 M574.5,189V208 M578.5,201V229 M581.5,223V235 M591.5,207V221 M598.5,203V221 M612.5,195V215 M619.5,205V217 M622.5,217V223 M629.5,206V211 M653.5,190V196 M660.5,191V197 M667.5,192V199 M670.5,195V201 M690.5,186V187 M694.5,185V196 M697.5,191V198 M701.5,196V202 M708.5,192V205 M718.5,194V197 M725.5,194V201 M738.5,191V202 M749.5,188V199 M756.5,186V210 M763.5,194V209 M766.5,207V214 M773.5,202V214 M777.5,213V223 M787.5,217V222 M794.5,215V223 M801.5,212V220 M808.5,205V213 M818.5,186V196 M822.5,196V216 M825.5,213V215 M832.5,206V221 M839.5,212V227 M843.5,225V249 M850.5,231V276 M870.5,194V210 M874.5,209V216 M881.5,197V203 M891.5,162V178 M895.5,175V183 M902.5,172V178 M905.5,176V180 M915.5,145V154 M926.5,138V141 M929.5,142V147 M936.5,123V146 M940.5,138V149 M943.5,148V156 M947.5,150V164 M954.5,151V166 M957.5,165V184 M968.5,169V180 M971.5,177V192 M981.5,171V187 M988.5,152V159 M999.5,136V152 M1009.5,134V148 M1019.5,136V137 M1023.5,136V146 M1026.5,140V151 M1030.5,149V155 M1033.5,150V157 M1036.5,147V159 M1043.5,152V161 M1064.5,117V141 M1074.5,134V144 M1081.5,140V147 M1088.5,141V153 M1095.5,140V159 M1105.5,140V149 M1109.5,149V152 M1112.5,150V162 M1119.5,146V163 M1123.5,160V169 M1130.5,157V174 M1133.5,172V190 M1154.5,154V166 M1167.5,145V164 M1171.5,162V172 M1174.5,171V176 M1178.5,172V182 M1181.5,180V192 M1185.5,188V215 M1188.5,212V240 M1192.5,235V247 M1202.5,222V225 M1209.5,223V231 M1226.5,198V211 M1229.5,206V210 M1247.5,180V184 M1250.5,183V191 M1274.5,155V174 M1278.5,170V175 M1285.5,169V178 M1299.5,160V169 M1302.5,165V177 M1306.5,175V185 M1309.5,184V189 M1312.5,187V192 M1323.5,163V188 M1326.5,183V189 M1330.5,188V202 M1337.5,193V201 M1344.5,187V196 M1350.5,188V198 M1354.5,194V201 M1361.5,198V203 M1368.5,197V203 M1385.5,163V169 M1388.5,160V179 M1392.5,172V183 M1395.5,183V199 M1399.5,196V217 M1406.5,207V227 M1409.5,222V234 M1423.5,219V222 M1427.5,217V251 M1430.5,248V278 M1433.5,273V296 M1444.5,265V274 M1468.5,224V236 M1472.5,233V247 M1475.5,244V254 M1478.5,249V251 M1482.5,247V255 M1485.5,254V258 M1499.5,217V240 M1502.5,228V248 M1506.5,243V268 M1520.5,237V243 M1526.5,224V234 M1533.5,223V236 M1544.5,219V229 M1554.5,209V228 M1557.5,218V234 M1564.5,216V231 M1574.5,218V220 M1581.5,210V237 M1585.5,228V234 M1592.5,225V233 M1598.5,226V246 M1602.5,236V252 M1609.5,235V239 M1612.5,235V240 M1616.5,239V245 M1619.5,233V251 M1629.5,224V234 M1640.5,216V229 M1643.5,222V231 M1653.5,221V228 M1660.5,217V228 M1667.5,224V250 M1684.5,217V231 M1688.5,229V238 M1698.5,224V238 M1701.5,237V243 M1715.5,226V242 M1722.5,243V247 M1725.5,247V248 M1736.5,243V248 M1746.5,239V248 M1750.5,240V251 M1753.5,246V275 M1756.5,265V280 M1767.5,256V267 M1770.5,265V274 M1781.5,255V259 M1794.5,243V249" stroke="#7ecbea" stroke-width="1" fill="none"/>
<path d="M80.0,326.0h3v9.0h-3z M83.0,335.0h3v3.0h-3z M90.0,333.0h3v3.0h-3z M94.0,335.0h3v2.0h-3z M97.0,335.0h3v5.0h-3z M104.0,340.0h3v2.0h-3z M111.0,330.0h3v17.0h-3z M118.0,339.0h3v8.0h-3z M121.0,346.0h3v4.0h-3z M125.0,350.0h3v5.0h-3z M128.0,355.0h3v12.0h-3z M132.0,367.0h3v8.0h-3z M142.0,361.0h3v2.0h-3z M152.0,334.0h3v9.0h-3z M163.0,330.0h3v4.0h-3z M166.0,333.0h3v8.0h-3z M177.0,338.0h3v9.0h-3z M180.0,347.0h3v7.0h-3z M191.0,348.0h3v6.0h-3z M194.0,353.0h3v4.0h-3z M201.0,353.0h3v5.0h-3z M204.0,358.0h3v3.0h-3z M215.0,354.0h3v5.0h-3z M218.0,360.0h3v2.0h-3z M222.0,360.0h3v4.0h-3z M239.0,342.0h3v8.0h-3z M242.0,350.0h3v4.0h-3z M249.0,341.0h3v8.0h-3z M263.0,346.0h3v2.0h-3z M270.0,338.0h3v5.0h-3z M280.0,330.0h3v4.0h-3z M287.0,330.0h3v6.0h-3z M294.0,330.0h3v3.0h-3z M298.0,333.0h3v4.0h-3z M305.0,334.0h3v8.0h-3z M312.0,340.0h3v4.0h-3z M319.0,341.0h3v8.0h-3z M322.0,348.0h3v2.0h-3z M329.0,347.0h3v3.0h-3z M332.0,350.0h3v3.0h-3z M336.0,353.0h3v2.0h-3z M343.0,338.0h3v10.0h-3z M357.0,325.0h3v11.0h-3z M363.0,309.0h3v2.0h-3z M367.0,312.0h3v2.0h-3z M374.0,287.0h3v4.0h-3z M381.0,287.0h3v11.0h-3z M384.0,298.0h3v9.0h-3z M388.0,308.0h3v5.0h-3z M395.0,293.0h3v2.0h-3z M398.0,294.0h3v7.0h-3z M401.0,301.0h3v8.0h-3z M429.0,254.0h3v20.0h-3z M436.0,204.0h3v5.0h-3z M440.0,209.0h3v49.0h-3z M453.0,163.0h3v9.0h-3z M464.0,144.0h3v11.0h-3z M471.0,142.0h3v18.0h-3z M474.0,161.0h3v29.0h-3z M478.0,189.0h3v6.0h-3z M491.0,139.0h3v8.0h-3z M495.0,147.0h3v14.0h-3z M508.0,146.0h3v4.0h-3z M512.0,151.0h3v2.0h-3z M515.0,151.0h3v2.0h-3z M519.0,152.0h3v2.0h-3z M522.0,154.0h3v4.0h-3z M529.0,147.0h3v5.0h-3z M532.0,152.0h3v18.0h-3z M539.0,164.0h3v8.0h-3z M543.0,171.0h3v3.0h-3z M546.0,173.0h3v6.0h-3z M549.0,178.0h3v2.0h-3z M553.0,179.0h3v2.0h-3z M563.0,168.0h3v4.0h-3z M567.0,172.0h3v11.0h-3z M570.0,183.0h3v7.0h-3z M573.0,190.0h3v16.0h-3z M577.0,206.0h3v17.0h-3z M580.0,223.0h3v8.0h-3z M590.0,209.0h3v5.0h-3z M597.0,212.0h3v5.0h-3z M611.0,201.0h3v14.0h-3z M618.0,212.0h3v5.0h-3z M621.0,218.0h3v3.0h-3z M628.0,207.0h3v3.0h-3z M652.0,191.0h3v4.0h-3z M659.0,193.0h3v3.0h-3z M666.0,194.0h3v4.0h-3z M669.0,198.0h3v2.0h-3z M689.0,186.0h3v2.0h-3z M693.0,187.0h3v7.0h-3z M696.0,194.0h3v2.0h-3z M700.0,197.0h3v5.0h-3z M707.0,195.0h3v7.0h-3z M717.0,195.0h3v2.0h-3z M724.0,194.0h3v4.0h-3z M737.0,193.0h3v9.0h-3z M748.0,192.0h3v4.0h-3z M755.0,189.0h3v20.0h-3z M762.0,196.0h3v13.0h-3z M765.0,209.0h3v5.0h-3z M772.0,205.0h3v8.0h-3z M776.0,213.0h3v6.0h-3z M786.0,217.0h3v3.0h-3z M793.0,217.0h3v2.0h-3z M800.0,216.0h3v3.0h-3z M807.0,205.0h3v6.0h-3z M817.0,188.0h3v8.0h-3z M821.0,196.0h3v19.0h-3z M824.0,215.0h3v2.0h-3z M831.0,206.0h3v11.0h-3z M838.0,213.0h3v13.0h-3z M842.0,226.0h3v16.0h-3z M849.0,233.0h3v32.0h-3z M869.0,197.0h3v13.0h-3z M873.0,210.0h3v5.0h-3z M880.0,199.0h3v2.0h-3z M890.0,165.0h3v11.0h-3z M894.0,176.0h3v5.0h-3z M901.0,173.0h3v4.0h-3z M904.0,177.0h3v2.0h-3z M914.0,148.0h3v5.0h-3z M925.0,140.0h3v2.0h-3z M928.0,142.0h3v4.0h-3z M935.0,127.0h3v12.0h-3z M939.0,139.0h3v10.0h-3z M942.0,149.0h3v5.0h-3z M946.0,155.0h3v9.0h-3z M953.0,156.0h3v10.0h-3z M956.0,167.0h3v14.0h-3z M967.0,169.0h3v11.0h-3z M970.0,181.0h3v10.0h-3z M980.0,171.0h3v11.0h-3z M987.0,153.0h3v5.0h-3z M998.0,137.0h3v14.0h-3z M1008.0,135.0h3v7.0h-3z M1018.0,136.0h3v2.0h-3z M1022.0,136.0h3v9.0h-3z M1025.0,145.0h3v6.0h-3z M1029.0,151.0h3v2.0h-3z M1032.0,151.0h3v2.0h-3z M1035.0,152.0h3v5.0h-3z M1042.0,153.0h3v8.0h-3z M1063.0,119.0h3v21.0h-3z M1073.0,137.0h3v6.0h-3z M1080.0,141.0h3v5.0h-3z M1087.0,143.0h3v6.0h-3z M1094.0,141.0h3v15.0h-3z M1104.0,143.0h3v6.0h-3z M1108.0,149.0h3v2.0h-3z M1111.0,152.0h3v4.0h-3z M1118.0,150.0h3v11.0h-3z M1122.0,161.0h3v7.0h-3z M1129.0,158.0h3v14.0h-3z M1132.0,172.0h3v15.0h-3z M1153.0,156.0h3v8.0h-3z M1166.0,148.0h3v15.0h-3z M1170.0,163.0h3v9.0h-3z M1173.0,172.0h3v4.0h-3z M1177.0,176.0h3v5.0h-3z M1180.0,181.0h3v10.0h-3z M1184.0,190.0h3v25.0h-3z M1187.0,215.0h3v24.0h-3z M1191.0,239.0h3v6.0h-3z M1201.0,222.0h3v2.0h-3z M1208.0,224.0h3v7.0h-3z M1225.0,198.0h3v9.0h-3z M1228.0,207.0h3v3.0h-3z M1246.0,182.0h3v2.0h-3z M1249.0,184.0h3v3.0h-3z M1273.0,155.0h3v18.0h-3z M1277.0,174.0h3v2.0h-3z M1284.0,170.0h3v6.0h-3z M1298.0,161.0h3v8.0h-3z M1301.0,170.0h3v6.0h-3z M1305.0,175.0h3v9.0h-3z M1308.0,184.0h3v5.0h-3z M1311.0,189.0h3v2.0h-3z M1322.0,164.0h3v20.0h-3z M1325.0,184.0h3v4.0h-3z M1329.0,189.0h3v10.0h-3z M1336.0,194.0h3v2.0h-3z M1343.0,187.0h3v7.0h-3z M1349.0,192.0h3v5.0h-3z M1353.0,196.0h3v4.0h-3z M1360.0,199.0h3v3.0h-3z M1367.0,199.0h3v3.0h-3z M1384.0,163.0h3v5.0h-3z M1387.0,168.0h3v7.0h-3z M1391.0,175.0h3v8.0h-3z M1394.0,183.0h3v15.0h-3z M1398.0,199.0h3v15.0h-3z M1405.0,210.0h3v15.0h-3z M1408.0,225.0h3v8.0h-3z M1422.0,221.0h3v2.0h-3z M1426.0,221.0h3v28.0h-3z M1429.0,249.0h3v25.0h-3z M1432.0,274.0h3v14.0h-3z M1443.0,266.0h3v7.0h-3z M1467.0,226.0h3v8.0h-3z M1471.0,234.0h3v10.0h-3z M1474.0,244.0h3v7.0h-3z M1477.0,251.0h3v2.0h-3z M1481.0,251.0h3v4.0h-3z M1484.0,255.0h3v2.0h-3z M1498.0,217.0h3v11.0h-3z M1501.0,228.0h3v19.0h-3z M1505.0,247.0h3v13.0h-3z M1519.0,237.0h3v3.0h-3z M1525.0,226.0h3v5.0h-3z M1532.0,225.0h3v9.0h-3z M1543.0,223.0h3v4.0h-3z M1553.0,214.0h3v9.0h-3z M1556.0,222.0h3v12.0h-3z M1563.0,217.0h3v14.0h-3z M1573.0,219.0h3v2.0h-3z M1580.0,210.0h3v20.0h-3z M1584.0,230.0h3v2.0h-3z M1591.0,227.0h3v5.0h-3z M1597.0,227.0h3v10.0h-3z M1601.0,237.0h3v15.0h-3z M1608.0,236.0h3v2.0h-3z M1611.0,237.0h3v3.0h-3z M1615.0,240.0h3v3.0h-3z M1618.0,243.0h3v2.0h-3z M1628.0,225.0h3v3.0h-3z M1639.0,220.0h3v5.0h-3z M1642.0,224.0h3v7.0h-3z M1652.0,222.0h3v5.0h-3z M1659.0,218.0h3v9.0h-3z M1666.0,224.0h3v20.0h-3z M1683.0,218.0h3v12.0h-3z M1687.0,230.0h3v7.0h-3z M1697.0,225.0h3v12.0h-3z M1700.0,237.0h3v2.0h-3z M1714.0,226.0h3v15.0h-3z M1721.0,245.0h3v2.0h-3z M1724.0,247.0h3v2.0h-3z M1735.0,245.0h3v3.0h-3z M1745.0,241.0h3v5.0h-3z M1749.0,244.0h3v4.0h-3z M1752.0,247.0h3v21.0h-3z M1755.0,268.0h3v10.0h-3z M1766.0,264.0h3v2.0h-3z M1769.0,266.0h3v3.0h-3z M1780.0,256.0h3v2.0h-3z M1793.0,243.0h3v2.0h-3z" fill="#7ecbea"/>
<path d="M91.0,334.0 L95.0,335.7 L98.0,336.7 L102.0,336.8 L105.0,338.5 L108.0,337.1 L112.0,339.4 L115.0,339.6 L119.0,341.3 L122.0,342.8 L126.0,347.9 L129.0,352.0 L133.0,359.0 L136.0,362.6 L140.0,364.7 L143.0,365.8 L147.0,361.3 L150.0,353.2 L153.0,348.8 L157.0,343.9 L160.0,337.7 L164.0,335.5 L167.0,336.9 L171.0,336.2 L174.0,336.8 L178.0,340.2 L181.0,344.2 L185.0,346.1 L188.0,347.6 L192.0,350.6 L195.0,352.6 L198.0,352.5 L202.0,353.9 L205.0,356.6 L209.0,357.2 L212.0,356.5 L216.0,357.5 L219.0,358.0 L223.0,358.6 L226.0,358.0 L230.0,357.8 L233.0,355.8 L236.0,352.0 L240.0,349.2 L243.0,349.2 L247.0,346.9 L250.0,346.9 L254.0,348.3 L257.0,347.8 L261.0,346.1 L264.0,347.7 L268.0,345.3 L271.0,344.3 L275.0,343.4 L278.0,339.9 L281.0,337.1 L285.0,335.8 L288.0,334.3 L292.0,331.8 L295.0,332.8 L299.0,333.5 L302.0,334.0 L306.0,335.3 L309.0,337.4 L313.0,339.6 L316.0,340.2 L320.0,343.3 L323.0,344.7 L326.0,345.6 L330.0,346.7 L333.0,349.2 L337.0,350.1 L340.0,347.8 L344.0,348.3 L347.0,347.6 L351.0,344.6 L354.0,339.0 L358.0,338.6 L361.0,330.6 L364.0,323.5 L368.0,318.8 L371.0,311.3 L375.0,302.4 L378.0,298.2 L382.0,295.5 L385.0,294.2 L389.0,299.4 L392.0,299.9 L396.0,301.3 L399.0,301.9 L402.0,302.2 L406.0,299.3 L409.0,300.2 L413.0,300.7 L416.0,298.3 L420.0,292.7 L423.0,286.5 L427.0,277.7 L430.0,273.1 L434.0,256.2 L437.0,241.8 L441.0,239.9 L444.0,228.9 L447.0,208.1 L451.0,199.8 L454.0,192.3 L458.0,170.4 L461.0,159.3 L465.0,156.4 L468.0,152.5 L472.0,150.2 L475.0,158.3 L479.0,168.6 L482.0,173.9 L486.0,175.4 L489.0,171.1 L492.0,162.6 L496.0,155.7 L499.0,150.6 L503.0,150.1 L506.0,151.7 L509.0,152.3 L513.0,150.4 L516.0,149.6 L520.0,150.8 L523.0,153.1 L526.0,152.4 L530.0,152.5 L533.0,156.0 L537.0,158.4 L540.0,161.1 L544.0,166.5 L547.0,171.9 L550.0,173.7 L554.0,176.6 L557.0,176.4 L561.0,175.2 L564.0,173.8 L568.0,174.7 L571.0,176.6 L574.0,183.5 L578.0,194.7 L581.0,206.6 L585.0,214.9 L588.0,218.6 L591.0,220.2 L595.0,218.0 L598.0,215.1 L602.0,212.9 L605.0,212.3 L608.0,209.8 L612.0,210.3 L615.0,209.1 L619.0,209.6 L622.0,212.8 L626.0,213.8 L629.0,213.0 L632.0,213.0 L636.0,211.4 L639.0,208.7 L643.0,208.1 L646.0,206.3 L650.0,202.4 L653.0,199.6 L656.0,196.7 L660.0,195.2 L663.0,193.7 L667.0,195.2 L670.0,196.1 L673.0,197.2 L677.0,196.9 L680.0,196.3 L684.0,193.9 L687.0,190.9 L690.0,188.7 L694.0,188.6 L697.0,189.7 L701.0,192.9 L704.0,194.8 L708.0,197.9 L711.0,198.3 L714.0,198.0 L718.0,196.8 L721.0,196.9 L725.0,196.1 L728.0,195.9 L732.0,195.4 L735.0,194.7 L738.0,196.1 L742.0,196.3 L745.0,195.6 L749.0,196.3 L752.0,195.3 L756.0,196.7 L759.0,196.2 L763.0,199.5 L766.0,203.1 L770.0,206.5 L773.0,207.2 L777.0,211.9 L780.0,213.7 L784.0,214.2 L787.0,217.3 L791.0,218.4 L794.0,218.4 L797.0,218.2 L801.0,218.7 L804.0,215.6 L808.0,214.2 L811.0,210.4 L815.0,204.7 L818.0,200.0 L822.0,202.0 L825.0,202.8 L829.0,204.0 L832.0,209.7 L836.0,213.1 L839.0,215.4 L843.0,220.8 L846.0,226.3 L850.0,235.9 L853.0,242.6 L856.0,244.5 L860.0,238.9 L863.0,232.3 L867.0,218.8 L870.0,211.4 L874.0,207.3 L877.0,204.2 L881.0,204.3 L884.0,202.0 L888.0,192.9 L891.0,185.2 L895.0,181.6 L898.0,176.3 L902.0,174.5 L905.0,177.1 L909.0,174.0 L912.0,167.5 L915.0,163.4 L919.0,158.0 L922.0,150.5 L926.0,146.5 L929.0,146.2 L933.0,141.2 L936.0,139.0 L940.0,140.7 L943.0,143.3 L947.0,147.0 L950.0,152.6 L954.0,158.0 L957.0,164.3 L961.0,169.0 L964.0,170.0 L968.0,174.7 L971.0,179.7 L974.0,181.2 L978.0,179.9 L981.0,182.5 L985.0,177.1 L988.0,170.5 L992.0,162.8 L995.0,155.8 L999.0,149.6 L1002.0,148.4 L1006.0,143.9 L1009.0,142.4 L1012.0,142.9 L1016.0,139.8 L1019.0,137.8 L1023.0,139.7 L1026.0,141.4 L1030.0,143.9 L1033.0,147.3 L1036.0,151.4 L1040.0,153.0 L1043.0,154.9 L1047.0,155.4 L1050.0,154.8 L1054.0,152.2 L1057.0,146.9 L1061.0,138.7 L1064.0,135.7 L1068.0,133.6 L1071.0,132.0 L1074.0,135.3 L1078.0,139.6 L1081.0,141.0 L1085.0,142.0 L1088.0,144.6 L1092.0,144.3 L1095.0,147.2 L1098.0,147.8 L1102.0,147.5 L1105.0,147.4 L1109.0,149.4 L1112.0,149.5 L1116.0,149.8 L1119.0,153.5 L1123.0,157.4 L1126.0,158.8 L1130.0,162.1 L1133.0,169.5 L1136.0,173.7 L1140.0,174.5 L1143.0,176.4 L1147.0,173.6 L1150.0,167.3 L1154.0,163.8 L1157.0,161.5 L1160.0,157.6 L1164.0,155.5 L1167.0,156.9 L1171.0,158.4 L1174.0,161.3 L1178.0,167.8 L1181.0,176.5 L1185.0,186.8 L1188.0,200.3 L1192.0,214.1 L1195.0,222.7 L1198.0,228.7 L1202.0,230.6 L1205.0,227.6 L1209.0,224.8 L1212.0,224.8 L1216.0,225.1 L1219.0,221.8 L1222.0,216.7 L1226.0,212.0 L1229.0,209.1 L1233.0,204.9 L1236.0,201.7 L1240.0,198.9 L1243.0,194.0 L1247.0,188.9 L1250.0,186.0 L1254.0,183.6 L1257.0,182.3 L1261.0,180.5 L1264.0,178.0 L1267.0,174.3 L1271.0,169.6 L1274.0,168.6 L1278.0,168.8 L1281.0,168.7 L1285.0,170.0 L1288.0,173.7 L1292.0,173.9 L1295.0,171.2 L1299.0,170.9 L1302.0,170.9 L1306.0,172.9 L1309.0,175.8 L1312.0,181.5 L1316.0,182.5 L1319.0,180.2 L1323.0,180.2 L1326.0,180.1 L1330.0,182.0 L1333.0,186.2 L1337.0,192.5 L1340.0,192.8 L1344.0,194.0 L1347.0,192.6 L1350.0,193.0 L1354.0,193.9 L1357.0,196.4 L1361.0,198.0 L1364.0,199.4 L1368.0,200.5 L1371.0,200.2 L1375.0,197.3 L1378.0,191.8 L1382.0,184.3 L1385.0,177.6 L1388.0,172.9 L1392.0,172.8 L1395.0,177.3 L1399.0,187.8 L1402.0,196.0 L1406.0,206.0 L1409.0,216.0 L1413.0,222.4 L1416.0,225.0 L1420.0,227.2 L1423.0,226.4 L1427.0,229.7 L1430.0,238.6 L1433.0,250.6 L1437.0,259.9 L1440.0,268.8 L1444.0,273.6 L1447.0,273.0 L1451.0,266.9 L1454.0,262.3 L1458.0,255.1 L1461.0,246.1 L1465.0,237.1 L1468.0,232.4 L1472.0,232.5 L1475.0,236.6 L1478.0,241.2 L1482.0,246.9 L1485.0,251.3 L1489.0,248.8 L1492.0,242.8 L1496.0,235.9 L1499.0,230.7 L1502.0,229.0 L1506.0,234.8 L1509.0,241.9 L1513.0,246.9 L1516.0,248.8 L1520.0,247.4 L1523.0,240.6 L1526.0,235.5 L1530.0,232.0 L1533.0,231.2 L1537.0,228.8 L1540.0,228.0 L1544.0,227.2 L1547.0,227.4 L1550.0,223.1 L1554.0,222.1 L1557.0,224.3 L1561.0,222.4 L1564.0,223.5 L1568.0,225.0 L1571.0,224.1 L1574.0,221.2 L1578.0,219.8 L1581.0,219.7 L1585.0,222.0 L1588.0,223.5 L1592.0,226.1 L1595.0,229.5 L1598.0,230.9 L1602.0,234.8 L1605.0,236.9 L1609.0,238.1 L1612.0,240.5 L1616.0,241.6 L1619.0,240.1 L1622.0,239.0 L1626.0,236.4 L1629.0,234.1 L1633.0,230.0 L1636.0,225.3 L1640.0,224.0 L1643.0,225.2 L1646.0,224.7 L1650.0,224.6 L1653.0,226.1 L1657.0,224.7 L1660.0,223.9 L1664.0,223.8 L1667.0,228.2 L1670.0,230.6 L1674.0,234.3 L1677.0,235.4 L1681.0,234.0 L1684.0,231.1 L1688.0,230.7 L1691.0,229.1 L1694.0,227.8 L1698.0,231.5 L1701.0,232.9 L1705.0,232.1 L1708.0,231.9 L1712.0,232.1 L1715.0,232.9 L1718.0,234.5 L1722.0,237.3 L1725.0,241.5 L1729.0,245.7 L1732.0,246.5 L1736.0,247.1 L1739.0,246.5 L1743.0,245.3 L1746.0,244.8 L1750.0,245.3 L1753.0,249.4 L1756.0,256.1 L1760.0,260.9 L1763.0,264.4 L1767.0,267.9 L1770.0,268.1 L1774.0,264.6 L1777.0,262.7 L1781.0,261.8 L1784.0,260.4 L1788.0,255.7 L1791.0,252.3 L1794.0,250.1 L1798.0,245.8" stroke="#a6d672" stroke-width="1" fill="none"/>
<path d="M73.8,351.0 C78.4,349.6 93.3,344.6 101.6,342.5 C109.9,340.4 116.1,338.4 123.6,338.7 C131.1,339.0 139.5,343.3 146.5,344.4 C153.5,345.5 157.6,344.8 165.6,345.4 C173.6,346.0 183.1,347.4 194.3,348.3 C205.5,349.2 223.3,350.3 232.6,351.0 C241.9,351.7 236.6,354.2 250.0,352.6 C263.4,351.1 297.3,344.0 313.0,341.7 C328.7,339.4 334.5,340.6 344.3,338.6 C354.1,336.7 360.6,334.7 371.7,330.0 C382.8,325.3 401.0,316.3 410.8,310.4 C420.6,304.5 423.9,302.5 430.4,294.7 C436.9,286.9 443.5,273.8 450.0,263.4 C456.5,252.9 463.1,241.1 469.5,232.0 C475.9,222.9 481.5,219.0 488.5,208.7 C495.5,198.4 504.9,178.4 511.3,170.0 C517.7,161.6 522.4,160.7 527.0,158.5 C531.6,156.3 533.0,156.4 538.7,157.0 C544.5,157.6 556.6,161.4 561.5,162.0 C566.4,162.6 564.9,159.5 568.0,160.8 C571.1,162.1 573.5,165.1 580.0,170.0 C586.5,174.9 598.7,185.1 607.0,190.0 C615.3,194.9 623.2,196.5 630.0,199.6 C636.8,202.7 641.2,208.0 648.0,208.7 C654.8,209.4 660.7,205.4 671.0,204.0 C681.3,202.6 695.2,201.1 710.0,200.0 C724.8,198.9 743.3,196.5 760.0,197.5 C776.7,198.5 793.3,203.1 810.0,206.0 C826.7,208.9 847.5,214.3 860.0,215.0 C872.5,215.7 874.3,214.2 885.0,210.0 C895.7,205.8 913.5,196.7 924.0,190.0 C934.5,183.3 939.8,174.8 947.8,170.0 C955.8,165.2 963.7,163.6 971.7,161.3 C979.7,159.1 987.6,157.1 995.6,156.5 C1003.6,155.9 1011.6,157.7 1019.6,157.7 C1027.6,157.7 1035.5,158.7 1043.5,156.5 C1051.5,154.3 1059.5,146.6 1067.4,144.6 C1075.3,142.6 1083.1,144.4 1091.0,144.6 C1098.9,144.8 1107.0,145.0 1115.0,145.8 C1123.0,146.6 1131.0,147.5 1139.0,149.3 C1147.0,151.1 1156.0,153.4 1163.0,156.5 C1170.0,159.6 1171.9,162.1 1181.0,167.9 C1190.1,173.7 1207.0,185.7 1217.4,191.3 C1227.8,197.0 1235.7,199.6 1243.5,201.8 C1251.3,204.0 1256.6,205.7 1264.4,204.4 C1272.2,203.1 1282.7,197.9 1290.5,194.0 C1298.3,190.1 1302.7,183.6 1311.4,181.0 C1320.1,178.4 1330.5,178.8 1342.7,178.3 C1354.9,177.9 1373.1,176.1 1384.4,178.3 C1395.7,180.5 1401.0,184.7 1410.5,191.3 C1420.0,197.9 1432.9,211.7 1441.7,218.0 C1450.5,224.3 1456.3,225.2 1463.5,229.0 C1470.7,232.8 1477.8,238.1 1485.0,241.0 C1492.2,243.9 1499.7,246.3 1507.0,246.5 C1514.3,246.7 1519.7,243.8 1528.7,242.0 C1537.8,240.2 1552.2,237.7 1561.3,235.7 C1570.3,233.7 1574.0,230.9 1583.0,230.0 C1592.0,229.1 1604.8,230.2 1615.6,230.0 C1626.4,229.8 1637.1,228.8 1648.0,229.0 C1658.9,229.2 1669.7,230.8 1681.0,231.3 C1692.3,231.8 1704.7,230.7 1715.7,232.0 C1726.7,233.3 1736.0,236.1 1747.0,239.0 C1758.0,241.9 1772.5,247.4 1781.8,249.6 C1791.1,251.8 1799.2,251.8 1802.7,252.2" stroke="#e88a3c" stroke-width="1.0" fill="none"/>
<rect x="74.5" y="318" width="6" height="6" fill="#ee7a72"/>
<rect x="150.5" y="323" width="6" height="6" fill="#ee7a72"/>
<rect x="289.5" y="321" width="6" height="6" fill="#ee7a72"/>
<rect x="368.5" y="280" width="6" height="6" fill="#ee7a72"/>
<rect x="486.5" y="124" width="6" height="6" fill="#ee7a72"/>
<rect x="684.5" y="174" width="6" height="6" fill="#ee7a72"/>
<rect x="930.5" y="116" width="6" height="6" fill="#ee7a72"/>
<rect x="1006.5" y="128" width="6" height="6" fill="#ee7a72"/>
<rect x="1061.5" y="111" width="6" height="6" fill="#ee7a72"/>
<rect x="1161.5" y="134" width="6" height="6" fill="#ee7a72"/>
<rect x="1375.5" y="155" width="6" height="6" fill="#ee7a72"/>
<rect x="1489.5" y="206" width="6" height="6" fill="#ee7a72"/>
<rect x="1637.5" y="210" width="6" height="6" fill="#ee7a72"/>
<rect x="1795.5" y="228" width="6" height="6" fill="#ee7a72"/>
<rect x="130.5" y="380" width="6" height="6" fill="#84ccee"/>
<rect x="216.5" y="366" width="6" height="6" fill="#84ccee"/>
<rect x="327.5" y="355" width="6" height="6" fill="#84ccee"/>
<rect x="479.5" y="202" width="6" height="6" fill="#84ccee"/>
<rect x="578.5" y="235" width="6" height="6" fill="#84ccee"/>
<rect x="847.5" y="277" width="6" height="6" fill="#84ccee"/>
<rect x="971.5" y="194" width="6" height="6" fill="#84ccee"/>
<rect x="1044.5" y="163" width="6" height="6" fill="#84ccee"/>
<rect x="1130.5" y="191" width="6" height="6" fill="#84ccee"/>
<rect x="1189.5" y="248" width="6" height="6" fill="#84ccee"/>
<rect x="1430.5" y="297" width="6" height="6" fill="#84ccee"/>
<rect x="1602.5" y="254" width="6" height="6" fill="#84ccee"/>
<rect x="1753.5" y="281" width="6" height="6" fill="#84ccee"/>
<text x="75.5" y="301.8" fill="#ee7a72" font-size="12" textLength="32.1" lengthAdjust="spacingAndGlyphs">14:10</text><text x="75.5" y="315.8" fill="#ee7a72" font-size="12" textLength="46.4" lengthAdjust="spacingAndGlyphs">151.408</text>
<text x="151.5" y="306.5" fill="#ee7a72" font-size="12" textLength="32.1" lengthAdjust="spacingAndGlyphs">16:00</text><text x="151.5" y="320.5" fill="#ee7a72" font-size="12" textLength="46.4" lengthAdjust="spacingAndGlyphs">151.399</text>
<text x="290.5" y="304.9" fill="#ee7a72" font-size="12" textLength="32.1" lengthAdjust="spacingAndGlyphs">19:20</text><text x="290.5" y="318.9" fill="#ee7a72" font-size="12" textLength="46.4" lengthAdjust="spacingAndGlyphs">151.402</text>
<text x="369.5" y="263.6" fill="#ee7a72" font-size="12" textLength="32.1" lengthAdjust="spacingAndGlyphs">21:15</text><text x="369.5" y="277.6" fill="#ee7a72" font-size="12" textLength="46.4" lengthAdjust="spacingAndGlyphs">151.480</text>
<text x="487.5" y="107.8" fill="#ee7a72" font-size="12" textLength="32.1" lengthAdjust="spacingAndGlyphs">00:05</text><text x="487.5" y="121.8" fill="#ee7a72" font-size="12" textLength="46.4" lengthAdjust="spacingAndGlyphs">151.774</text>
<text x="685.5" y="158.1" fill="#ee7a72" font-size="12" textLength="32.1" lengthAdjust="spacingAndGlyphs">04:50</text><text x="685.5" y="172.1" fill="#ee7a72" font-size="12" textLength="46.4" lengthAdjust="spacingAndGlyphs">151.679</text>
<text x="931.5" y="99.8" fill="#ee7a72" font-size="12" textLength="32.1" lengthAdjust="spacingAndGlyphs">11:00</text><text x="931.5" y="113.8" fill="#ee7a72" font-size="12" textLength="46.4" lengthAdjust="spacingAndGlyphs">151.789</text>
<text x="1007.5" y="112.0" fill="#ee7a72" font-size="12" textLength="32.1" lengthAdjust="spacingAndGlyphs">12:50</text><text x="1007.5" y="126.0" fill="#ee7a72" font-size="12" textLength="46.4" lengthAdjust="spacingAndGlyphs">151.766</text>
<text x="1062.5" y="95.1" fill="#ee7a72" font-size="12" textLength="32.1" lengthAdjust="spacingAndGlyphs">14:10</text><text x="1062.5" y="109.1" fill="#ee7a72" font-size="12" textLength="46.4" lengthAdjust="spacingAndGlyphs">151.798</text>
<text x="1162.5" y="117.9" fill="#ee7a72" font-size="12" textLength="32.1" lengthAdjust="spacingAndGlyphs">16:35</text><text x="1162.5" y="131.9" fill="#ee7a72" font-size="12" textLength="46.4" lengthAdjust="spacingAndGlyphs">151.755</text>
<text x="1376.5" y="138.5" fill="#ee7a72" font-size="12" textLength="32.1" lengthAdjust="spacingAndGlyphs">21:45</text><text x="1376.5" y="152.5" fill="#ee7a72" font-size="12" textLength="46.4" lengthAdjust="spacingAndGlyphs">151.716</text>
<text x="1490.5" y="189.9" fill="#ee7a72" font-size="12" textLength="32.1" lengthAdjust="spacingAndGlyphs">00:30</text><text x="1490.5" y="203.9" fill="#ee7a72" font-size="12" textLength="46.4" lengthAdjust="spacingAndGlyphs">151.619</text>
<text x="1638.5" y="193.6" fill="#ee7a72" font-size="12" textLength="32.1" lengthAdjust="spacingAndGlyphs">04:00</text><text x="1638.5" y="207.6" fill="#ee7a72" font-size="12" textLength="46.4" lengthAdjust="spacingAndGlyphs">151.612</text>
<text x="1796.5" y="212.2" fill="#ee7a72" font-size="12" textLength="32.1" lengthAdjust="spacingAndGlyphs">08:05</text><text x="1796.5" y="226.2" fill="#ee7a72" font-size="12" textLength="46.4" lengthAdjust="spacingAndGlyphs">151.577</text>
<text x="131.5" y="397.9" fill="#88cdee" font-size="12" textLength="32.1" lengthAdjust="spacingAndGlyphs">15:30</text><text x="131.5" y="411.9" fill="#88cdee" font-size="12" textLength="46.4" lengthAdjust="spacingAndGlyphs">151.303</text>
<text x="217.5" y="384.1" fill="#88cdee" font-size="12" textLength="32.1" lengthAdjust="spacingAndGlyphs">17:35</text><text x="217.5" y="398.1" fill="#88cdee" font-size="12" textLength="46.4" lengthAdjust="spacingAndGlyphs">151.329</text>
<text x="328.5" y="373.0" fill="#88cdee" font-size="12" textLength="32.1" lengthAdjust="spacingAndGlyphs">20:15</text><text x="328.5" y="387.0" fill="#88cdee" font-size="12" textLength="46.4" lengthAdjust="spacingAndGlyphs">151.350</text>
<text x="480.5" y="220.4" fill="#88cdee" font-size="12" textLength="32.1" lengthAdjust="spacingAndGlyphs">23:55</text><text x="480.5" y="234.4" fill="#88cdee" font-size="12" textLength="46.4" lengthAdjust="spacingAndGlyphs">151.638</text>
<text x="579.5" y="253.2" fill="#88cdee" font-size="12" textLength="32.1" lengthAdjust="spacingAndGlyphs">02:20</text><text x="579.5" y="267.2" fill="#88cdee" font-size="12" textLength="46.4" lengthAdjust="spacingAndGlyphs">151.576</text>
<text x="848.5" y="294.6" fill="#88cdee" font-size="12" textLength="32.1" lengthAdjust="spacingAndGlyphs">09:00</text><text x="848.5" y="308.6" fill="#88cdee" font-size="12" textLength="46.4" lengthAdjust="spacingAndGlyphs">151.498</text>
<text x="972.5" y="212.4" fill="#88cdee" font-size="12" textLength="32.1" lengthAdjust="spacingAndGlyphs">12:00</text><text x="972.5" y="226.4" fill="#88cdee" font-size="12" textLength="46.4" lengthAdjust="spacingAndGlyphs">151.653</text>
<text x="1045.5" y="180.6" fill="#88cdee" font-size="12" textLength="32.1" lengthAdjust="spacingAndGlyphs">13:45</text><text x="1045.5" y="194.6" fill="#88cdee" font-size="12" textLength="46.4" lengthAdjust="spacingAndGlyphs">151.713</text>
<text x="1131.5" y="208.7" fill="#88cdee" font-size="12" textLength="32.1" lengthAdjust="spacingAndGlyphs">15:50</text><text x="1131.5" y="222.7" fill="#88cdee" font-size="12" textLength="46.4" lengthAdjust="spacingAndGlyphs">151.660</text>
<text x="1190.5" y="265.9" fill="#88cdee" font-size="12" textLength="32.1" lengthAdjust="spacingAndGlyphs">17:15</text><text x="1190.5" y="279.9" fill="#88cdee" font-size="12" textLength="46.4" lengthAdjust="spacingAndGlyphs">151.552</text>
<text x="1431.5" y="314.7" fill="#88cdee" font-size="12" textLength="32.1" lengthAdjust="spacingAndGlyphs">23:00</text><text x="1431.5" y="328.7" fill="#88cdee" font-size="12" textLength="46.4" lengthAdjust="spacingAndGlyphs">151.460</text>
<text x="1603.5" y="272.3" fill="#88cdee" font-size="12" textLength="32.1" lengthAdjust="spacingAndGlyphs">03:10</text><text x="1603.5" y="286.3" fill="#88cdee" font-size="12" textLength="46.4" lengthAdjust="spacingAndGlyphs">151.540</text>
<text x="1754.5" y="298.8" fill="#88cdee" font-size="12" textLength="32.1" lengthAdjust="spacingAndGlyphs">07:05</text><text x="1754.5" y="312.8" fill="#88cdee" font-size="12" textLength="46.4" lengthAdjust="spacingAndGlyphs">151.490</text>
<path d="M1802.5,257V241" stroke="#f0e040" stroke-width="1.2"/><path d="M1799.5,245L1802.5,240L1805.5,245Z" fill="#f0e040"/>
<path d="M76.0,496.8h3V497.8h-3z M80.0,496.8h3V497.8h-3z M83.0,496.8h3V497.8h-3z M87.0,496.8h3V497.8h-3z M149.0,496.6h3V497.8h-3z M152.0,494.0h3V497.8h-3z M156.0,492.1h3V497.8h-3z M159.0,492.9h3V497.8h-3z M163.0,494.0h3V497.8h-3z M166.0,494.9h3V497.8h-3z M170.0,496.6h3V497.8h-3z M187.0,496.8h3V497.8h-3z M235.0,496.8h3V497.8h-3z M239.0,496.2h3V497.8h-3z M242.0,495.3h3V497.8h-3z M246.0,494.5h3V497.8h-3z M249.0,493.8h3V497.8h-3z M253.0,492.9h3V497.8h-3z M256.0,495.1h3V497.8h-3z M280.0,496.8h3V497.8h-3z M284.0,496.8h3V497.8h-3z M287.0,496.8h3V497.8h-3z M291.0,496.4h3V497.8h-3z M294.0,496.2h3V497.8h-3z M298.0,496.6h3V497.8h-3z M301.0,496.8h3V497.8h-3z M305.0,496.8h3V497.8h-3z M343.0,496.8h3V497.8h-3z M346.0,495.7h3V497.8h-3z M350.0,495.9h3V497.8h-3z M353.0,496.0h3V497.8h-3z M357.0,495.9h3V497.8h-3z M360.0,493.9h3V497.8h-3z M363.0,491.8h3V497.8h-3z M367.0,489.1h3V497.8h-3z M370.0,487.8h3V497.8h-3z M374.0,487.7h3V497.8h-3z M377.0,489.1h3V497.8h-3z M381.0,492.1h3V497.8h-3z M384.0,494.8h3V497.8h-3z M388.0,496.8h3V497.8h-3z M422.0,496.5h3V497.8h-3z M426.0,493.4h3V497.8h-3z M429.0,495.1h3V497.8h-3z M433.0,491.1h3V497.8h-3z M436.0,481.9h3V497.8h-3z M440.0,492.5h3V497.8h-3z M443.0,490.7h3V497.8h-3z M446.0,485.0h3V497.8h-3z M450.0,478.8h3V497.8h-3z M453.0,482.6h3V497.8h-3z M457.0,485.8h3V497.8h-3z M460.0,485.4h3V497.8h-3z M464.0,489.8h3V497.8h-3z M467.0,493.5h3V497.8h-3z M471.0,496.8h3V497.8h-3z M597.0,496.8h3V497.8h-3z M601.0,495.7h3V497.8h-3z M604.0,494.6h3V497.8h-3z M607.0,493.8h3V497.8h-3z M611.0,492.9h3V497.8h-3z M614.0,492.9h3V497.8h-3z M618.0,493.0h3V497.8h-3z M621.0,492.5h3V497.8h-3z M625.0,493.3h3V497.8h-3z M628.0,494.3h3V497.8h-3z M631.0,496.7h3V497.8h-3z M642.0,496.8h3V497.8h-3z M645.0,496.3h3V497.8h-3z M649.0,494.7h3V497.8h-3z M652.0,493.4h3V497.8h-3z M655.0,493.7h3V497.8h-3z M659.0,494.4h3V497.8h-3z M662.0,494.8h3V497.8h-3z M666.0,495.4h3V497.8h-3z M669.0,496.1h3V497.8h-3z M672.0,496.8h3V497.8h-3z M676.0,496.8h3V497.8h-3z M679.0,496.8h3V497.8h-3z M683.0,495.4h3V497.8h-3z M686.0,494.4h3V497.8h-3z M689.0,495.3h3V497.8h-3z M693.0,496.4h3V497.8h-3z M696.0,496.8h3V497.8h-3z M700.0,496.8h3V497.8h-3z M703.0,496.7h3V497.8h-3z M724.0,496.8h3V497.8h-3z M727.0,496.8h3V497.8h-3z M744.0,496.8h3V497.8h-3z M748.0,496.8h3V497.8h-3z M751.0,496.8h3V497.8h-3z M755.0,496.8h3V497.8h-3z M758.0,496.8h3V497.8h-3z M803.0,496.8h3V497.8h-3z M807.0,495.0h3V497.8h-3z M810.0,494.1h3V497.8h-3z M814.0,492.4h3V497.8h-3z M817.0,490.9h3V497.8h-3z M821.0,490.3h3V497.8h-3z M824.0,492.9h3V497.8h-3z M828.0,493.8h3V497.8h-3z M831.0,494.6h3V497.8h-3z M835.0,495.6h3V497.8h-3z M838.0,496.3h3V497.8h-3z M862.0,495.4h3V497.8h-3z M866.0,490.3h3V497.8h-3z M869.0,488.3h3V497.8h-3z M873.0,489.2h3V497.8h-3z M876.0,489.8h3V497.8h-3z M880.0,489.7h3V497.8h-3z M883.0,489.1h3V497.8h-3z M887.0,488.3h3V497.8h-3z M890.0,487.6h3V497.8h-3z M894.0,491.5h3V497.8h-3z M897.0,493.8h3V497.8h-3z M901.0,495.0h3V497.8h-3z M904.0,495.8h3V497.8h-3z M908.0,494.7h3V497.8h-3z M911.0,493.4h3V497.8h-3z M914.0,493.0h3V497.8h-3z M918.0,492.4h3V497.8h-3z M921.0,491.9h3V497.8h-3z M925.0,490.6h3V497.8h-3z M928.0,489.6h3V497.8h-3z M932.0,495.8h3V497.8h-3z M998.0,495.3h3V497.8h-3z M1001.0,493.3h3V497.8h-3z M1005.0,492.5h3V497.8h-3z M1008.0,491.8h3V497.8h-3z M1011.0,491.2h3V497.8h-3z M1015.0,493.6h3V497.8h-3z M1018.0,495.6h3V497.8h-3z M1022.0,496.5h3V497.8h-3z M1025.0,496.5h3V497.8h-3z M1029.0,496.5h3V497.8h-3z M1049.0,496.8h3V497.8h-3z M1053.0,495.1h3V497.8h-3z M1056.0,493.8h3V497.8h-3z M1060.0,493.3h3V497.8h-3z M1063.0,493.5h3V497.8h-3z M1067.0,493.3h3V497.8h-3z M1070.0,495.7h3V497.8h-3z M1122.0,496.8h3V497.8h-3z M1125.0,496.8h3V497.8h-3z M1149.0,496.7h3V497.8h-3z M1153.0,496.8h3V497.8h-3z M1159.0,496.3h3V497.8h-3z M1163.0,494.9h3V497.8h-3z M1166.0,495.5h3V497.8h-3z M1170.0,496.3h3V497.8h-3z M1173.0,496.8h3V497.8h-3z M1180.0,496.8h3V497.8h-3z M1211.0,496.4h3V497.8h-3z M1215.0,494.1h3V497.8h-3z M1218.0,491.7h3V497.8h-3z M1221.0,489.3h3V497.8h-3z M1225.0,486.1h3V497.8h-3z M1228.0,487.3h3V497.8h-3z M1232.0,488.9h3V497.8h-3z M1235.0,487.8h3V497.8h-3z M1239.0,486.0h3V497.8h-3z M1242.0,484.9h3V497.8h-3z M1246.0,485.9h3V497.8h-3z M1249.0,487.9h3V497.8h-3z M1253.0,490.0h3V497.8h-3z M1256.0,490.8h3V497.8h-3z M1260.0,491.8h3V497.8h-3z M1263.0,492.6h3V497.8h-3z M1266.0,493.4h3V497.8h-3z M1270.0,493.5h3V497.8h-3z M1273.0,494.3h3V497.8h-3z M1277.0,495.5h3V497.8h-3z M1280.0,496.4h3V497.8h-3z M1284.0,496.8h3V497.8h-3z M1287.0,496.8h3V497.8h-3z M1291.0,496.8h3V497.8h-3z M1294.0,496.8h3V497.8h-3z M1353.0,496.8h3V497.8h-3z M1356.0,496.8h3V497.8h-3z M1370.0,496.8h3V497.8h-3z M1374.0,495.4h3V497.8h-3z M1377.0,492.7h3V497.8h-3z M1381.0,489.1h3V497.8h-3z M1384.0,487.8h3V497.8h-3z M1387.0,489.7h3V497.8h-3z M1391.0,494.0h3V497.8h-3z M1422.0,496.2h3V497.8h-3z M1457.0,492.2h3V497.8h-3z M1460.0,489.8h3V497.8h-3z M1464.0,490.1h3V497.8h-3z M1467.0,489.0h3V497.8h-3z M1471.0,489.4h3V497.8h-3z M1474.0,491.7h3V497.8h-3z M1477.0,494.0h3V497.8h-3z M1488.0,496.5h3V497.8h-3z M1491.0,493.0h3V497.8h-3z M1495.0,489.2h3V497.8h-3z M1498.0,492.9h3V497.8h-3z M1501.0,496.5h3V497.8h-3z M1519.0,496.4h3V497.8h-3z M1522.0,495.0h3V497.8h-3z M1525.0,493.6h3V497.8h-3z M1529.0,492.6h3V497.8h-3z M1532.0,493.3h3V497.8h-3z M1536.0,494.2h3V497.8h-3z M1539.0,494.9h3V497.8h-3z M1543.0,496.6h3V497.8h-3z M1546.0,495.4h3V497.8h-3z M1549.0,493.4h3V497.8h-3z M1553.0,494.1h3V497.8h-3z M1556.0,494.6h3V497.8h-3z M1560.0,495.3h3V497.8h-3z M1563.0,496.5h3V497.8h-3z M1567.0,496.8h3V497.8h-3z M1570.0,496.8h3V497.8h-3z M1573.0,496.8h3V497.8h-3z M1577.0,496.8h3V497.8h-3z M1618.0,496.8h3V497.8h-3z M1621.0,495.9h3V497.8h-3z M1625.0,494.9h3V497.8h-3z M1628.0,494.7h3V497.8h-3z M1632.0,494.5h3V497.8h-3z M1635.0,494.5h3V497.8h-3z M1639.0,494.3h3V497.8h-3z M1642.0,495.0h3V497.8h-3z M1645.0,495.8h3V497.8h-3z M1649.0,496.7h3V497.8h-3z M1652.0,496.2h3V497.8h-3z M1656.0,495.3h3V497.8h-3z M1659.0,496.2h3V497.8h-3z M1663.0,496.8h3V497.8h-3z M1687.0,496.8h3V497.8h-3z M1690.0,496.6h3V497.8h-3z M1693.0,496.0h3V497.8h-3z M1697.0,496.8h3V497.8h-3z M1711.0,496.8h3V497.8h-3z M1714.0,496.8h3V497.8h-3z M1735.0,496.8h3V497.8h-3z M1738.0,496.8h3V497.8h-3z M1742.0,496.5h3V497.8h-3z M1745.0,496.1h3V497.8h-3z M1749.0,496.3h3V497.8h-3z M1780.0,496.8h3V497.8h-3z M1783.0,495.8h3V497.8h-3z M1787.0,493.9h3V497.8h-3z M1790.0,492.1h3V497.8h-3z M1793.0,491.4h3V497.8h-3z M1797.0,491.2h3V497.8h-3z" fill="#a8389f"/>
<path d="M90.0,497.8h3V498.8h-3z M94.0,497.8h3V499.3h-3z M97.0,497.8h3V499.7h-3z M101.0,497.8h3V499.9h-3z M104.0,497.8h3V500.4h-3z M107.0,497.8h3V500.8h-3z M111.0,497.8h3V501.5h-3z M114.0,497.8h3V501.5h-3z M118.0,497.8h3V501.1h-3z M121.0,497.8h3V501.7h-3z M125.0,497.8h3V504.1h-3z M128.0,497.8h3V505.3h-3z M132.0,497.8h3V505.1h-3z M135.0,497.8h3V502.4h-3z M139.0,497.8h3V500.4h-3z M142.0,497.8h3V499.1h-3z M146.0,497.8h3V498.8h-3z M173.0,497.8h3V498.8h-3z M177.0,497.8h3V499.5h-3z M180.0,497.8h3V500.5h-3z M184.0,497.8h3V498.8h-3z M191.0,497.8h3V498.8h-3z M194.0,497.8h3V499.1h-3z M197.0,497.8h3V498.9h-3z M201.0,497.8h3V498.8h-3z M204.0,497.8h3V498.8h-3z M208.0,497.8h3V498.8h-3z M211.0,497.8h3V498.8h-3z M215.0,497.8h3V498.8h-3z M218.0,497.8h3V498.8h-3z M222.0,497.8h3V498.8h-3z M225.0,497.8h3V498.8h-3z M229.0,497.8h3V498.8h-3z M232.0,497.8h3V498.8h-3z M260.0,497.8h3V498.8h-3z M263.0,497.8h3V498.8h-3z M267.0,497.8h3V499.3h-3z M270.0,497.8h3V499.7h-3z M274.0,497.8h3V499.1h-3z M277.0,497.8h3V498.8h-3z M308.0,497.8h3V498.8h-3z M312.0,497.8h3V499.0h-3z M315.0,497.8h3V499.4h-3z M319.0,497.8h3V499.5h-3z M322.0,497.8h3V499.6h-3z M325.0,497.8h3V499.8h-3z M329.0,497.8h3V500.6h-3z M332.0,497.8h3V501.2h-3z M336.0,497.8h3V501.2h-3z M339.0,497.8h3V499.0h-3z M391.0,497.8h3V499.2h-3z M395.0,497.8h3V499.5h-3z M398.0,497.8h3V498.9h-3z M401.0,497.8h3V498.8h-3z M405.0,497.8h3V499.2h-3z M408.0,497.8h3V500.4h-3z M412.0,497.8h3V502.0h-3z M415.0,497.8h3V500.7h-3z M419.0,497.8h3V498.8h-3z M474.0,497.8h3V503.6h-3z M478.0,497.8h3V512.9h-3z M481.0,497.8h3V513.5h-3z M485.0,497.8h3V509.0h-3z M488.0,497.8h3V505.2h-3z M491.0,497.8h3V504.2h-3z M495.0,497.8h3V506.0h-3z M498.0,497.8h3V507.4h-3z M502.0,497.8h3V507.7h-3z M505.0,497.8h3V506.6h-3z M508.0,497.8h3V505.4h-3z M512.0,497.8h3V504.4h-3z M515.0,497.8h3V504.2h-3z M519.0,497.8h3V504.0h-3z M522.0,497.8h3V504.9h-3z M525.0,497.8h3V505.8h-3z M529.0,497.8h3V506.3h-3z M532.0,497.8h3V506.4h-3z M536.0,497.8h3V506.5h-3z M539.0,497.8h3V506.3h-3z M543.0,497.8h3V505.7h-3z M546.0,497.8h3V504.8h-3z M549.0,497.8h3V503.2h-3z M553.0,497.8h3V502.0h-3z M556.0,497.8h3V501.0h-3z M560.0,497.8h3V499.9h-3z M563.0,497.8h3V499.6h-3z M567.0,497.8h3V499.2h-3z M570.0,497.8h3V501.1h-3z M573.0,497.8h3V503.6h-3z M577.0,497.8h3V506.5h-3z M580.0,497.8h3V508.0h-3z M584.0,497.8h3V509.9h-3z M587.0,497.8h3V508.0h-3z M590.0,497.8h3V503.0h-3z M594.0,497.8h3V499.0h-3z M635.0,497.8h3V498.9h-3z M638.0,497.8h3V498.8h-3z M707.0,497.8h3V498.8h-3z M710.0,497.8h3V500.3h-3z M713.0,497.8h3V501.3h-3z M717.0,497.8h3V499.4h-3z M720.0,497.8h3V498.8h-3z M731.0,497.8h3V499.9h-3z M734.0,497.8h3V500.3h-3z M737.0,497.8h3V499.4h-3z M741.0,497.8h3V498.8h-3z M762.0,497.8h3V498.8h-3z M765.0,497.8h3V498.8h-3z M769.0,497.8h3V500.0h-3z M772.0,497.8h3V500.0h-3z M776.0,497.8h3V499.8h-3z M779.0,497.8h3V499.8h-3z M783.0,497.8h3V499.7h-3z M786.0,497.8h3V499.5h-3z M790.0,497.8h3V499.2h-3z M793.0,497.8h3V498.8h-3z M796.0,497.8h3V498.8h-3z M800.0,497.8h3V498.8h-3z M842.0,497.8h3V498.9h-3z M845.0,497.8h3V501.4h-3z M849.0,497.8h3V505.6h-3z M852.0,497.8h3V508.7h-3z M855.0,497.8h3V505.8h-3z M859.0,497.8h3V500.6h-3z M935.0,497.8h3V499.2h-3z M939.0,497.8h3V501.1h-3z M942.0,497.8h3V500.8h-3z M946.0,497.8h3V501.3h-3z M949.0,497.8h3V502.8h-3z M953.0,497.8h3V504.1h-3z M956.0,497.8h3V505.1h-3z M960.0,497.8h3V505.1h-3z M963.0,497.8h3V503.9h-3z M967.0,497.8h3V503.2h-3z M970.0,497.8h3V505.1h-3z M973.0,497.8h3V507.0h-3z M977.0,497.8h3V506.5h-3z M980.0,497.8h3V505.1h-3z M984.0,497.8h3V503.3h-3z M987.0,497.8h3V502.0h-3z M991.0,497.8h3V499.7h-3z M994.0,497.8h3V498.8h-3z M1032.0,497.8h3V498.8h-3z M1035.0,497.8h3V500.0h-3z M1039.0,497.8h3V501.9h-3z M1042.0,497.8h3V501.7h-3z M1046.0,497.8h3V498.9h-3z M1073.0,497.8h3V498.8h-3z M1077.0,497.8h3V499.8h-3z M1080.0,497.8h3V500.2h-3z M1084.0,497.8h3V502.4h-3z M1087.0,497.8h3V504.9h-3z M1091.0,497.8h3V503.4h-3z M1094.0,497.8h3V501.0h-3z M1097.0,497.8h3V500.6h-3z M1101.0,497.8h3V501.1h-3z M1104.0,497.8h3V501.1h-3z M1108.0,497.8h3V500.5h-3z M1111.0,497.8h3V500.0h-3z M1115.0,497.8h3V499.3h-3z M1118.0,497.8h3V498.8h-3z M1129.0,497.8h3V498.8h-3z M1132.0,497.8h3V500.9h-3z M1135.0,497.8h3V503.3h-3z M1139.0,497.8h3V503.8h-3z M1142.0,497.8h3V501.4h-3z M1146.0,497.8h3V498.8h-3z M1156.0,497.8h3V498.8h-3z M1177.0,497.8h3V498.8h-3z M1184.0,497.8h3V499.6h-3z M1187.0,497.8h3V504.5h-3z M1191.0,497.8h3V513.7h-3z M1194.0,497.8h3V511.8h-3z M1197.0,497.8h3V506.8h-3z M1201.0,497.8h3V501.8h-3z M1204.0,497.8h3V500.1h-3z M1208.0,497.8h3V498.8h-3z M1298.0,497.8h3V498.8h-3z M1301.0,497.8h3V499.4h-3z M1305.0,497.8h3V500.8h-3z M1308.0,497.8h3V501.4h-3z M1311.0,497.8h3V502.0h-3z M1315.0,497.8h3V502.2h-3z M1318.0,497.8h3V502.0h-3z M1322.0,497.8h3V502.1h-3z M1325.0,497.8h3V502.7h-3z M1329.0,497.8h3V503.3h-3z M1332.0,497.8h3V502.5h-3z M1336.0,497.8h3V501.9h-3z M1339.0,497.8h3V500.8h-3z M1343.0,497.8h3V499.6h-3z M1346.0,497.8h3V499.0h-3z M1349.0,497.8h3V498.8h-3z M1360.0,497.8h3V498.8h-3z M1363.0,497.8h3V501.1h-3z M1367.0,497.8h3V499.7h-3z M1394.0,497.8h3V498.8h-3z M1398.0,497.8h3V502.2h-3z M1401.0,497.8h3V504.9h-3z M1405.0,497.8h3V507.6h-3z M1408.0,497.8h3V508.6h-3z M1412.0,497.8h3V507.4h-3z M1415.0,497.8h3V504.6h-3z M1419.0,497.8h3V499.0h-3z M1426.0,497.8h3V501.2h-3z M1429.0,497.8h3V505.0h-3z M1432.0,497.8h3V508.7h-3z M1436.0,497.8h3V506.3h-3z M1439.0,497.8h3V504.1h-3z M1443.0,497.8h3V503.0h-3z M1446.0,497.8h3V504.3h-3z M1450.0,497.8h3V502.5h-3z M1453.0,497.8h3V498.8h-3z M1481.0,497.8h3V498.8h-3z M1484.0,497.8h3V501.1h-3z M1505.0,497.8h3V501.3h-3z M1508.0,497.8h3V502.5h-3z M1512.0,497.8h3V500.2h-3z M1515.0,497.8h3V498.8h-3z M1580.0,497.8h3V498.8h-3z M1584.0,497.8h3V498.8h-3z M1587.0,497.8h3V498.8h-3z M1591.0,497.8h3V501.2h-3z M1594.0,497.8h3V502.7h-3z M1597.0,497.8h3V503.0h-3z M1601.0,497.8h3V503.2h-3z M1604.0,497.8h3V503.7h-3z M1608.0,497.8h3V502.7h-3z M1611.0,497.8h3V500.7h-3z M1615.0,497.8h3V499.0h-3z M1666.0,497.8h3V498.8h-3z M1669.0,497.8h3V499.6h-3z M1673.0,497.8h3V500.8h-3z M1676.0,497.8h3V502.0h-3z M1680.0,497.8h3V500.4h-3z M1683.0,497.8h3V498.8h-3z M1700.0,497.8h3V498.8h-3z M1704.0,497.8h3V498.9h-3z M1707.0,497.8h3V498.8h-3z M1717.0,497.8h3V499.4h-3z M1721.0,497.8h3V500.7h-3z M1724.0,497.8h3V500.5h-3z M1728.0,497.8h3V500.5h-3z M1731.0,497.8h3V499.3h-3z M1752.0,497.8h3V498.8h-3z M1755.0,497.8h3V501.4h-3z M1759.0,497.8h3V502.1h-3z M1762.0,497.8h3V500.1h-3z M1766.0,497.8h3V500.0h-3z M1769.0,497.8h3V500.4h-3z M1773.0,497.8h3V499.1h-3z M1776.0,497.8h3V498.8h-3z" fill="#5a3cc4"/>
<path d="M73.3,488.8 C77.7,489.1 91.4,489.8 99.9,490.9 C108.3,492.0 118.0,493.6 123.8,495.4 C129.5,497.2 130.8,500.1 134.4,501.5 C137.9,503.0 141.5,504.3 145.0,504.2 C148.6,504.0 152.1,501.9 155.6,500.7 C159.2,499.6 162.7,497.7 166.3,497.3 C169.8,496.8 171.6,497.4 176.9,498.1 C182.2,498.8 191.1,500.8 198.2,501.5 C205.2,502.3 214.1,502.4 219.4,502.6 C224.7,502.8 225.6,503.3 230.0,502.6 C234.5,501.8 240.7,499.4 246.0,498.1 C251.3,496.7 254.8,495.7 261.9,494.6 C269.0,493.5 279.6,491.4 288.5,491.4 C297.3,491.4 306.6,493.2 315.0,494.6 C323.5,496.0 331.9,499.7 339.0,499.9 C346.0,500.2 352.7,498.1 357.6,496.2 C362.4,494.3 363.8,491.2 368.2,488.8 C372.6,486.3 377.9,482.1 384.1,481.3 C390.3,480.5 399.2,483.4 405.4,484.0 C411.6,484.6 416.0,486.9 421.3,484.8 C426.6,482.7 432.8,475.7 437.3,471.5 C441.7,467.3 444.3,463.5 447.9,459.5 C451.4,455.6 455.0,450.5 458.5,447.6 C462.1,444.7 466.5,442.7 469.1,442.3 C471.8,441.8 471.8,442.6 474.5,444.9 C477.1,447.3 481.1,453.3 485.1,456.3 C489.1,459.4 493.9,461.2 498.4,463.5 C502.8,465.8 506.8,467.7 511.6,470.2 C516.5,472.6 523.2,475.4 527.6,478.1 C532.0,480.9 534.7,484.1 538.2,486.6 C541.8,489.2 545.1,491.9 548.8,493.5 C552.6,495.2 556.0,494.9 560.6,496.7 C565.2,498.6 571.7,501.4 576.6,504.7 C581.4,508.0 585.4,515.1 589.9,516.7 C594.3,518.2 598.3,515.5 603.1,514.0 C608.0,512.5 613.8,509.4 619.1,507.9 C624.4,506.3 628.8,506.1 635.0,504.7 C641.2,503.3 649.2,500.8 656.3,499.4 C663.4,498.0 670.4,496.7 677.5,496.2 C684.6,495.7 691.7,496.0 698.8,496.2 C705.9,496.4 712.9,497.0 720.0,497.3 C727.1,497.6 734.6,497.8 741.3,498.1 C747.9,498.3 754.1,498.2 759.9,498.9 C765.6,499.5 770.1,501.2 775.8,502.0 C781.6,502.9 789.1,503.9 794.4,504.2 C799.7,504.4 802.4,504.8 807.7,503.4 C813.0,501.9 821.0,495.6 826.3,495.4 C831.6,495.2 833.6,499.8 839.6,502.0 C845.6,504.3 856.0,509.4 862.2,508.7 C868.4,508.0 871.2,501.6 876.8,498.1 C882.3,494.5 889.6,489.8 895.4,487.4 C901.1,485.1 906.9,485.5 911.3,484.0 C915.7,482.4 918.4,479.8 921.9,478.1 C925.5,476.5 928.1,473.9 932.6,474.1 C937.0,474.4 943.2,476.8 948.5,479.5 C953.8,482.1 959.6,486.9 964.5,490.1 C969.3,493.3 972.4,498.4 977.7,498.9 C983.0,499.3 990.6,494.2 996.3,492.7 C1002.1,491.3 1006.1,490.5 1012.3,490.1 C1018.5,489.6 1027.1,489.0 1033.5,490.1 C1039.9,491.2 1045.1,496.7 1050.6,496.7 C1056.1,496.7 1062.1,491.1 1066.6,490.1 C1071.0,489.1 1072.8,489.8 1077.2,490.9 C1081.6,492.0 1086.9,495.0 1093.1,496.7 C1099.3,498.5 1108.2,500.4 1114.4,501.5 C1120.6,502.6 1125.0,502.8 1130.3,503.4 C1135.6,503.9 1141.0,504.8 1146.3,504.7 C1151.6,504.6 1156.9,502.4 1162.2,502.6 C1167.5,502.8 1173.3,503.9 1178.2,506.0 C1183.0,508.2 1187.9,512.9 1191.4,515.3 C1195.0,517.8 1195.4,519.7 1199.4,520.6 C1203.4,521.6 1209.1,522.9 1215.3,521.2 C1221.5,519.5 1230.4,514.6 1236.6,510.5 C1242.8,506.5 1247.2,500.3 1252.5,496.7 C1257.9,493.2 1262.3,490.8 1268.5,489.3 C1274.7,487.7 1283.5,487.4 1289.7,487.4 C1295.9,487.4 1300.4,488.2 1305.7,489.3 C1311.0,490.4 1317.2,492.2 1321.6,494.1 C1326.0,496.0 1326.9,498.9 1332.2,500.7 C1337.6,502.5 1347.3,503.9 1353.5,504.7 C1359.7,505.5 1364.6,506.1 1369.4,505.2 C1374.3,504.3 1378.7,501.0 1382.7,499.4 C1386.7,497.8 1389.4,494.7 1393.3,495.4 C1397.3,496.1 1402.6,500.9 1406.6,503.4 C1410.6,505.8 1412.8,508.1 1417.3,510.0 C1421.7,511.9 1427.9,512.5 1433.2,514.8 C1438.5,517.1 1443.8,524.4 1449.1,523.8 C1454.5,523.3 1459.8,514.3 1465.1,511.3 C1470.4,508.4 1475.7,507.4 1481.0,506.0 C1486.3,504.7 1490.8,504.5 1497.0,503.4 C1503.2,502.3 1511.0,500.5 1518.2,499.4 C1525.4,498.3 1535.2,497.7 1540.3,497.0 C1545.4,496.3 1545.7,495.8 1548.7,495.1 C1551.7,494.4 1554.9,493.3 1558.1,492.7 C1561.2,492.1 1563.7,491.8 1567.4,491.4 C1571.1,491.0 1576.8,490.3 1580.5,490.5 C1584.2,490.6 1586.4,490.9 1589.8,492.3 C1593.3,493.7 1597.3,497.0 1601.1,498.9 C1604.8,500.7 1608.5,503.2 1612.3,503.5 C1616.0,503.9 1619.1,501.8 1623.5,500.7 C1627.9,499.7 1633.5,497.9 1638.5,497.0 C1643.5,496.1 1649.1,495.6 1653.4,495.1 C1657.8,494.7 1660.9,493.6 1664.7,494.2 C1668.4,494.8 1672.1,498.1 1675.9,498.9 C1679.6,499.7 1682.7,498.9 1687.1,498.9 C1691.5,498.9 1697.7,498.9 1702.1,498.9 C1706.4,498.9 1709.5,498.1 1713.3,498.9 C1717.0,499.7 1720.8,502.4 1724.5,503.5 C1728.2,504.7 1731.4,505.8 1735.7,505.8 C1740.1,505.8 1746.6,503.5 1750.7,503.5 C1754.7,503.5 1756.3,505.0 1760.0,505.8 C1763.8,506.6 1768.8,508.1 1773.1,508.2 C1777.5,508.3 1782.5,507.3 1786.2,506.4 C1790.0,505.4 1792.8,503.8 1795.6,502.6 C1798.3,501.5 1801.5,500.0 1802.7,499.4" stroke="#e88a3c" stroke-width="1.1" fill="none" stroke-linejoin="round"/>
<path d="M73.3,488.8 C75.5,488.9 83.0,488.8 86.6,489.3 C90.1,489.8 91.9,491.2 94.5,492.0 C97.2,492.7 99.4,492.7 102.5,493.5 C105.6,494.4 110.0,496.5 113.1,497.3 C116.2,498.0 118.0,496.2 121.1,498.1 C124.2,500.0 129.1,507.4 131.7,508.7 C134.4,510.0 134.4,506.8 137.0,506.0 C139.7,505.3 144.6,506.1 147.7,504.2 C150.8,502.3 152.5,496.3 155.6,494.6 C158.7,492.9 163.6,493.7 166.3,494.1 C168.9,494.4 168.9,495.4 171.6,496.7 C174.2,498.1 179.6,501.7 182.2,502.0 C184.9,502.4 185.3,498.8 187.5,498.9 C189.7,498.9 192.0,502.0 195.5,502.6 C199.0,503.2 204.8,502.4 208.8,502.6 C212.8,502.7 215.4,503.4 219.4,503.4 C223.4,503.4 228.7,503.8 232.7,502.6 C236.7,501.4 239.8,498.1 243.3,496.2 C246.9,494.3 250.8,491.6 253.9,491.4 C257.0,491.3 258.8,494.7 261.9,495.4 C265.0,496.1 269.0,496.2 272.5,495.4 C276.1,494.7 279.6,491.7 283.2,490.9 C286.7,490.0 290.3,490.0 293.8,490.4 C297.3,490.7 300.9,491.8 304.4,492.7 C308.0,493.7 311.5,495.2 315.0,496.2 C318.6,497.2 322.1,497.7 325.7,498.9 C329.2,500.1 332.8,503.8 336.3,503.4 C339.8,502.9 343.4,497.7 346.9,496.2 C350.5,494.7 353.8,497.6 357.6,494.6 C361.3,491.6 366.4,481.4 369.5,478.1 C372.6,474.9 373.9,475.2 376.2,474.9 C378.4,474.7 379.9,475.2 382.8,476.8 C385.7,478.4 390.1,483.6 393.4,484.8 C396.7,486.0 399.4,483.3 402.7,484.0 C406.0,484.6 410.2,488.6 413.3,488.8 C416.4,488.9 418.9,487.2 421.3,484.8 C423.8,482.3 426.2,475.7 428.0,474.1 C429.7,472.6 430.4,478.7 431.9,475.5 C433.5,472.2 435.6,456.7 437.3,454.8 C438.9,452.8 439.6,466.5 441.8,463.5 C444.0,460.6 448.2,441.3 450.5,437.0 C452.9,432.7 454.1,438.3 455.9,437.8 C457.6,437.2 459.2,433.7 461.2,433.8 C463.2,433.9 465.8,436.4 467.8,438.3 C469.8,440.1 471.1,440.1 473.1,444.9 C475.1,449.8 478.0,463.4 479.8,467.5 C481.5,471.6 482.0,470.1 483.8,469.6 C485.5,469.2 487.5,463.9 490.4,464.9 C493.3,465.8 497.5,473.5 501.0,475.5 C504.6,477.5 508.5,476.0 511.6,476.8 C514.7,477.6 516.5,478.3 519.6,480.3 C522.7,482.3 527.1,486.2 530.2,488.8 C533.3,491.3 535.6,493.6 538.2,495.4 C540.9,497.2 542.4,498.8 546.2,499.4 C549.9,500.0 556.9,498.4 560.6,498.9 C564.4,499.3 565.9,499.7 568.6,502.0 C571.3,504.3 573.6,508.6 576.6,512.7 C579.6,516.8 583.6,526.1 586.7,526.8 C589.8,527.4 592.4,519.2 595.2,516.7 C597.9,514.1 600.5,513.1 603.1,511.3 C605.8,509.6 608.0,507.6 611.1,506.0 C614.2,504.5 618.9,502.7 621.7,502.0 C624.6,501.4 626.2,501.4 628.4,502.0 C630.6,502.7 632.1,506.3 635.0,506.0 C637.9,505.8 642.5,502.5 645.6,500.7 C648.7,498.9 650.1,496.3 653.6,495.4 C657.2,494.5 662.9,495.3 666.9,495.4 C670.9,495.5 674.2,496.6 677.5,496.2 C680.8,495.8 683.7,492.9 686.8,492.7 C689.9,492.6 693.2,495.0 696.1,495.4 C699.0,495.8 701.2,494.5 704.1,495.4 C707.0,496.3 710.3,500.5 713.4,500.7 C716.5,500.9 720.3,497.3 722.7,496.7 C725.1,496.2 726.2,496.6 728.0,497.3 C729.8,497.9 730.7,500.6 733.3,500.7 C736.0,500.9 739.5,498.5 743.9,498.1 C748.4,497.6 755.5,497.2 759.9,498.1 C764.3,498.9 767.0,502.3 770.5,503.4 C774.1,504.5 777.6,504.4 781.1,504.7 C784.7,505.0 788.2,505.2 791.8,505.2 C795.3,505.2 798.8,506.1 802.4,504.7 C805.9,503.3 809.9,499.3 813.0,496.7 C816.1,494.2 818.3,490.0 821.0,489.3 C823.6,488.6 825.9,490.8 829.0,492.7 C832.1,494.7 836.9,498.5 839.6,500.7 C842.2,502.9 842.6,503.2 844.9,506.0 C847.2,508.8 850.7,516.8 853.4,517.5 C856.1,518.1 858.3,513.9 860.8,510.0 C863.4,506.1 865.7,497.6 868.8,494.1 C871.9,490.5 875.7,491.2 879.4,488.8 C883.2,486.3 888.3,480.4 891.4,479.5 C894.5,478.5 895.6,482.3 898.0,482.9 C900.5,483.6 902.5,484.9 906.0,483.4 C909.5,482.0 915.4,476.9 919.3,474.1 C923.2,471.4 926.3,466.1 929.4,467.0 C932.5,467.9 935.1,477.1 937.9,479.5 C940.6,481.9 942.3,478.8 945.9,481.3 C949.4,483.8 955.6,492.0 959.1,494.6 C962.7,497.2 964.2,494.4 967.1,496.7 C970.0,499.1 972.9,508.2 976.4,508.7 C980.0,509.1 984.2,502.9 988.4,499.4 C992.6,495.8 997.7,490.1 1001.6,487.4 C1005.6,484.8 1009.2,483.2 1012.3,483.4 C1015.4,483.7 1017.1,487.9 1020.2,488.8 C1023.3,489.6 1027.3,487.2 1030.9,488.8 C1034.4,490.3 1038.2,497.0 1041.5,498.1 C1044.8,499.2 1047.8,497.0 1050.6,495.4 C1053.5,493.9 1055.7,490.4 1058.6,488.8 C1061.5,487.1 1065.2,485.1 1067.9,485.6 C1070.6,486.0 1072.1,489.8 1074.5,491.4 C1077.0,493.1 1080.1,493.4 1082.5,495.4 C1084.9,497.4 1086.9,502.6 1089.1,503.4 C1091.4,504.1 1093.4,500.1 1095.8,499.9 C1098.2,499.8 1100.7,502.0 1103.8,502.6 C1106.9,503.2 1110.4,503.5 1114.4,503.4 C1118.4,503.3 1123.7,500.7 1127.7,502.0 C1131.7,503.4 1134.3,511.3 1138.3,511.3 C1142.3,511.3 1148.5,503.2 1151.6,502.0 C1154.7,500.9 1155.1,504.6 1156.9,504.2 C1158.7,503.7 1160.0,499.7 1162.2,499.4 C1164.4,499.1 1167.1,501.2 1170.2,502.6 C1173.3,503.9 1178.2,505.5 1180.8,507.4 C1183.5,509.3 1184.1,509.6 1186.1,514.0 C1188.1,518.4 1190.1,532.2 1192.8,533.9 C1195.4,535.7 1198.3,527.3 1202.1,524.6 C1205.8,522.0 1211.4,521.4 1215.3,518.0 C1219.3,514.6 1222.9,506.6 1226.0,504.2 C1229.1,501.7 1230.8,505.7 1233.9,503.4 C1237.0,501.0 1240.6,492.7 1244.6,490.1 C1248.6,487.4 1253.4,488.3 1257.9,487.4 C1262.3,486.5 1266.7,484.8 1271.1,484.8 C1275.6,484.8 1280.9,487.1 1284.4,487.4 C1288.0,487.7 1289.3,486.1 1292.4,486.6 C1295.5,487.2 1299.5,489.3 1303.0,490.9 C1306.6,492.5 1310.5,495.0 1313.6,496.2 C1316.7,497.4 1319.0,496.6 1321.6,498.1 C1324.3,499.5 1327.4,503.4 1329.6,504.7 C1331.8,506.0 1332.7,506.0 1334.9,506.0 C1337.1,506.0 1339.8,504.9 1342.9,504.7 C1346.0,504.5 1350.8,504.8 1353.5,504.7 C1356.2,504.6 1356.8,503.4 1358.8,504.2 C1360.8,505.0 1362.8,510.1 1365.5,509.5 C1368.1,508.9 1371.7,504.3 1374.8,500.7 C1377.8,497.2 1381.4,490.0 1384.0,488.2 C1386.7,486.5 1387.8,487.0 1390.7,490.1 C1393.6,493.2 1398.4,502.6 1401.3,506.8 C1404.2,511.0 1405.7,513.6 1408.0,515.3 C1410.2,517.1 1412.2,518.4 1414.6,517.5 C1417.0,516.5 1419.5,508.1 1422.6,509.5 C1425.7,510.9 1429.9,523.4 1433.2,526.0 C1436.5,528.5 1439.8,523.7 1442.5,524.6 C1445.2,525.5 1446.3,534.1 1449.1,531.3 C1452.0,528.4 1456.2,512.6 1459.8,507.4 C1463.3,502.1 1467.3,500.6 1470.4,499.9 C1473.5,499.3 1475.9,501.9 1478.4,503.4 C1480.8,504.8 1482.1,510.1 1485.0,508.7 C1487.9,507.2 1491.9,494.9 1495.6,494.6 C1499.4,494.3 1503.8,506.1 1507.6,506.8 C1511.4,507.5 1514.7,501.2 1518.2,498.9 C1521.8,496.5 1525.2,493.5 1528.8,492.7 C1532.5,492.0 1537.6,493.8 1540.3,494.2 C1543.0,494.6 1543.4,495.8 1545.0,495.1 C1546.5,494.5 1547.1,491.4 1549.6,490.5 C1552.1,489.5 1557.0,489.4 1559.9,489.5 C1562.9,489.7 1564.0,491.2 1567.4,491.4 C1570.8,491.5 1577.1,490.2 1580.5,490.5 C1583.9,490.7 1585.5,491.0 1588.0,492.7 C1590.5,494.4 1592.7,498.5 1595.5,500.7 C1598.3,503.0 1602.3,505.3 1604.8,506.4 C1607.3,507.4 1608.2,507.9 1610.4,507.3 C1612.6,506.7 1615.7,504.2 1617.9,502.6 C1620.1,501.1 1621.0,499.2 1623.5,497.9 C1626.0,496.7 1630.1,495.9 1632.9,495.1 C1635.7,494.4 1637.5,493.4 1640.3,493.3 C1643.1,493.2 1646.9,494.7 1649.7,494.6 C1652.5,494.4 1654.7,492.4 1657.2,492.3 C1659.7,492.3 1662.2,493.0 1664.7,494.2 C1667.1,495.4 1670.0,498.2 1672.1,499.8 C1674.3,501.4 1675.6,503.7 1677.7,503.5 C1679.9,503.4 1682.4,500.0 1685.2,498.9 C1688.0,497.8 1691.5,496.8 1694.6,497.0 C1697.7,497.2 1700.8,500.0 1703.9,500.2 C1707.0,500.3 1710.5,497.1 1713.3,497.9 C1716.1,498.7 1718.3,503.5 1720.8,505.0 C1723.3,506.6 1725.4,507.2 1728.2,507.3 C1731.0,507.4 1734.8,506.2 1737.6,505.4 C1740.4,504.6 1742.9,503.2 1745.1,502.6 C1747.3,502.1 1748.5,500.6 1750.7,502.1 C1752.9,503.5 1756.0,510.0 1758.2,511.0 C1760.3,512.1 1761.6,508.3 1763.8,508.2 C1766.0,508.2 1768.8,510.8 1771.3,510.7 C1773.8,510.5 1776.2,508.5 1778.7,507.3 C1781.2,506.1 1784.0,505.1 1786.2,503.5 C1788.4,502.0 1790.0,499.3 1791.8,497.9 C1793.7,496.5 1795.6,495.9 1797.4,495.1 C1799.2,494.4 1801.8,493.6 1802.7,493.3" stroke="#a6dc72" stroke-width="1.1" fill="none" stroke-linejoin="round"/>
<path d="M74.5,633.3 L77.5,631.6 L81.0,651.3 L88.1,642.6 L91.6,649.6 L95.1,664.4 L98.6,630.9 L102.1,661.3 L105.6,641.4 L109.1,653.1 L112.6,657.8 L118.5,656.6 L122.0,660.1 L130.1,687.0 L137.2,669.5 L141.8,668.3 L146.5,675.3 L150.0,659.0 L153.5,660.1 L158.2,653.1 L161.7,651.3 L165.2,654.3 L167.6,653.1 L171.1,666.0 L178.1,637.9 L181.6,651.3 L185.1,650.8 L188.6,641.9 L192.1,658.3 L195.6,656.6 L200.3,667.2 L206.1,676.5 L209.6,676.0 L213.1,671.8 L216.2,680.0 L219.0,664.8 L222.5,668.3 L229.5,660.6 L233.0,678.4 L236.5,672.3 L240.0,634.4 L243.5,634.4 L247.0,630.2 L250.6,634.4 L254.1,625.5 L257.6,643.8 L261.1,645.6 L264.6,637.9 L268.1,641.0 L271.6,636.8 L278.6,623.9 L282.1,626.2 L285.6,637.9 L291.5,637.9 L296.1,648.5 L299.7,646.1 L302.5,662.9 L306.0,634.0 L310.2,642.6 L316.0,649.6 L320.7,646.6 L326.5,681.2 L331.2,683.5 L334.7,681.2 L337.8,689.4 L340.6,669.5 L344.1,656.6 L347.6,659.0 L351.1,648.5 L354.6,657.8 L358.1,644.9 L365.1,606.8 L371.0,606.8 L375.6,599.4 L379.1,603.6 L382.7,602.9 L389.7,622.7 L393.2,624.6 L396.2,618.5 L400.2,622.7 L403.7,620.4 L410.7,637.9 L413.5,655.9 L417.7,646.1 L423.6,634.4 L427.5,622.7 L431.1,641.9 L434.1,615.3 L437.6,617.6 L441.1,640.3 L444.6,626.9 L448.1,624.6 L455.1,625.1 L462.2,620.4 L465.7,626.2 L469.2,625.1 L472.7,627.4 L476.2,642.6 L479.7,637.9 L483.2,647.3 L490.2,622.7 L493.7,646.1 L497.2,655.5 L502.9,649.6 L506.4,655.0 L510.6,660.1 L513.8,652.7 L517.6,660.8 L521.6,657.8 L524.6,636.8 L528.6,639.1 L532.1,646.1 L534.9,674.2 L537.9,674.6 L546.1,663.6 L549.6,665.3 L553.1,671.8 L555.9,680.0 L559.0,677.0 L562.5,679.3 L566.0,676.0 L569.5,697.6 L573.0,701.1 L576.5,702.2 L580.0,713.9 L583.1,711.6 L587.0,723.3 L590.5,702.2 L594.0,687.7 L597.6,688.2 L601.1,685.4 L604.6,688.7 L608.1,688.2 L611.6,680.7 L614.4,682.4 L620.9,652.0 L627.9,644.9 L631.5,648.0 L636.1,643.8 L639.6,646.1 L642.4,655.5 L645.5,648.5 L650.2,644.9 L652.5,644.9 L656.0,640.3 L659.5,649.6 L663.0,652.0 L666.5,653.1 L670.0,652.0 L673.5,646.1 L677.0,647.3 L680.6,627.4 L686.4,625.5 L691.1,644.9 L694.6,650.8 L697.6,660.1 L701.6,649.6 L705.1,654.3 L707.9,666.0 L712.1,663.6 L719.1,654.3 L722.6,654.3 L728.5,651.3 L732.0,675.3 L735.5,671.8 L739.7,659.7 L743.7,658.3 L747.2,658.3 L750.7,660.1 L754.2,659.0 L760.0,642.6 L763.6,664.8 L767.1,677.7 L770.6,677.7 L774.1,677.7 L777.6,681.2 L781.1,653.1 L784.1,695.2 L789.3,702.2 L795.1,710.4 L798.2,710.4 L801.4,712.7 L804.5,699.9 L811.5,637.9 L815.0,622.7 L819.7,615.3 L822.5,615.7 L825.5,635.6 L829.0,635.6 L832.5,655.5 L836.0,653.1 L843.1,663.6 L846.1,659.0 L850.1,677.7 L853.6,684.7 L857.1,681.2 L867.6,655.0 L871.1,659.7 L874.6,653.6 L878.1,656.6 L885.1,639.1 L888.6,634.4 L891.7,626.9 L895.2,641.0 L898.0,620.4 L901.5,615.3 L905.7,625.1 L910.9,625.1 L915.5,629.3 L922.5,623.9 L926.1,613.8 L932.9,632.1 L936.4,653.6 L943.4,630.9 L946.9,645.6 L951.6,644.9 L955.1,647.3 L958.6,655.5 L962.1,659.0 L966.8,662.5 L971.0,669.5 L974.9,685.4 L978.5,682.4 L985.0,656.6 L988.3,666.0 L991.3,665.3 L995.3,654.3 L999.0,657.3 L1006.0,634.0 L1009.3,635.1 L1013.5,640.3 L1016.3,641.0 L1019.4,634.4 L1022.9,616.2 L1026.4,624.6 L1029.9,637.9 L1033.9,628.6 L1036.9,647.3 L1040.4,660.1 L1043.9,664.4 L1047.4,659.0 L1050.9,667.6 L1054.4,654.3 L1057.9,651.3 L1061.5,649.6 L1065.0,631.6 L1068.5,630.9 L1072.0,660.1 L1079.0,647.3 L1082.5,664.4 L1085.5,650.8 L1088.8,659.7 L1092.6,647.3 L1095.8,648.5 L1098.9,656.6 L1102.8,676.5 L1107.0,677.7 L1109.9,674.2 L1113.6,684.7 L1119.9,667.2 L1130.4,671.4 L1133.9,678.4 L1137.4,669.5 L1140.9,675.3 L1144.5,671.8 L1148.0,659.0 L1151.5,656.6 L1155.0,673.0 L1158.5,673.0 L1162.0,645.6 L1165.5,664.8 L1168.3,669.5 L1172.0,669.5 L1176.0,673.0 L1179.1,666.0 L1182.3,666.0 L1186.5,683.5 L1190.0,696.4 L1193.6,698.0 L1196.4,683.5 L1199.4,684.7 L1204.1,681.2 L1207.1,683.1 L1210.4,702.7 L1213.4,687.0 L1216.9,682.4 L1221.6,668.3 L1224.0,667.6 L1227.5,672.3 L1232.1,656.6 L1234.5,646.1 L1238.0,619.2 L1241.5,623.9 L1248.5,636.3 L1252.0,633.3 L1259.0,622.3 L1262.5,631.6 L1265.6,627.4 L1269.5,634.4 L1273.1,634.4 L1276.6,629.3 L1280.1,629.7 L1283.6,633.3 L1287.1,641.0 L1290.6,634.0 L1293.6,647.3 L1296.4,635.6 L1299.9,634.0 L1303.4,652.7 L1310.5,649.6 L1314.0,667.6 L1317.5,658.3 L1321.0,659.0 L1324.5,662.0 L1328.0,684.7 L1331.5,675.3 L1335.0,682.4 L1338.5,680.0 L1342.0,674.2 L1345.5,675.3 L1349.0,687.7 L1356.1,671.8 L1362.8,675.5 L1366.5,691.0 L1369.1,674.5 L1372.6,668.4 L1376.6,637.3 L1383.2,633.8 L1389.9,651.6 L1393.8,647.9 L1397.3,664.9 L1403.1,667.0 L1407.9,676.3 L1411.1,663.1 L1415.1,665.7 L1418.5,669.7 L1421.7,655.9 L1425.7,674.5 L1429.7,688.3 L1432.9,693.1 L1436.3,683.5 L1439.8,677.7 L1443.0,680.3 L1447.0,679.0 L1449.6,679.8 L1455.7,659.1 L1459.5,661.2 L1463.7,656.4 L1466.9,659.6 L1470.1,671.8 L1477.0,660.4 L1480.7,640.5 L1483.4,661.7 L1487.6,660.4 L1490.8,647.9 L1494.3,623.2 L1497.4,633.8 L1501.4,655.1 L1508.1,671.0 L1512.1,664.4 L1518.7,658.5 L1525.3,646.3 L1529.3,648.4 L1532.8,643.7 L1536.0,647.9 L1540.0,655.1 L1543.1,672.4 L1549.8,630.4 L1553.2,632.0 L1556.7,619.2 L1559.9,625.9 L1563.9,639.1 L1567.3,643.1 L1570.5,649.8 L1574.5,643.1 L1577.2,647.9 L1580.6,627.7 L1587.8,637.8 L1594.4,667.0 L1598.4,689.6 L1602.4,688.8 L1605.6,692.3 L1609.0,700.3 L1615.1,667.0 L1618.9,672.9 L1622.3,667.6 L1626.3,667.6 L1629.5,671.8 L1636.9,656.4 L1640.1,641.8 L1644.4,639.9 L1646.2,638.4 L1649.7,621.3 L1652.9,621.3 L1657.7,616.6 L1660.8,633.8 L1667.5,651.6 L1671.5,669.7 L1674.7,677.1 L1678.1,672.4 L1681.6,655.1 L1687.9,664.4 L1691.4,662.3 L1695.4,651.6 L1698.6,671.0 L1702.0,667.6 L1705.5,672.9 L1709.2,659.6 L1712.6,661.2 L1716.1,660.4 L1719.3,670.2 L1722.7,661.7 L1726.7,665.7 L1730.4,677.1 L1733.9,676.3 L1740.5,670.2 L1743.7,674.5 L1747.2,664.9 L1750.6,667.6 L1753.8,690.4 L1757.8,695.7 L1761.8,677.7 L1765.0,671.8 L1768.4,667.6 L1771.9,679.8 L1778.3,663.9 L1781.7,667.0 L1785.2,666.5 L1788.9,658.5 L1792.3,661.7 L1799.0,654.3 L1802.4,623.2" stroke="#a6dc72" stroke-width="1.1" fill="none" stroke-linejoin="round"/>
<path d="M73.3,812.4 L77.3,813.0 L81.3,815.1 L86.6,815.4 L90.6,814.6 L94.5,809.8 L98.5,806.6 L102.0,816.4 L105.2,813.8 L109.1,817.0 L113.1,820.4 L115.8,819.1 L119.0,824.9 L122.4,823.6 L129.6,836.9 L133.1,834.5 L137.0,827.6 L140.2,830.2 L143.7,828.9 L147.7,830.2 L151.7,823.9 L155.6,821.2 L158.3,821.7 L161.0,825.7 L164.9,826.5 L167.6,824.9 L171.6,831.3 L176.9,830.5 L182.2,831.0 L184.9,830.2 L188.9,823.6 L191.5,835.0 L195.5,831.0 L199.5,826.5 L203.5,828.4 L208.8,832.4 L216.2,818.5 L223.4,827.0 L227.4,825.7 L231.4,825.7 L235.3,825.2 L243.3,829.2 L246.0,829.2 L248.6,824.9 L256.6,823.9 L264.6,821.2 L268.6,820.4 L272.5,824.9 L275.2,822.3 L278.4,813.8 L281.8,814.8 L285.8,817.5 L293.8,815.6 L297.8,815.1 L302.3,817.2 L306.5,815.1 L313.7,815.9 L317.7,817.7 L320.4,816.4 L324.3,821.7 L329.7,824.9 L335.0,827.8 L339.0,827.0 L344.3,818.5 L348.3,819.1 L352.2,820.7 L358.9,818.5 L364.2,813.8 L368.2,810.6 L372.2,809.0 L376.2,807.1 L380.1,809.0 L382.8,807.9 L386.2,811.6 L389.4,810.3 L392.6,811.6 L396.1,805.8 L399.5,807.7 L403.3,804.5 L406.7,808.4 L410.2,805.3 L413.9,804.7 L417.3,797.8 L420.8,796.5 L424.0,789.3 L428.0,788.5 L431.4,799.1 L434.6,769.9 L438.6,773.4 L441.8,792.0 L445.2,761.2 L449.2,763.3 L455.3,774.4 L458.5,762.0 L465.2,766.5 L472.3,759.8 L475.8,776.0 L479.2,777.9 L483.8,771.3 L487.2,762.8 L493.6,763.3 L497.0,769.9 L501.0,768.1 L504.2,771.3 L507.7,768.6 L511.6,777.9 L514.3,780.6 L517.5,775.2 L521.5,800.5 L524.9,801.8 L528.1,785.9 L531.6,813.8 L535.6,827.6 L538.2,827.0 L542.2,824.4 L546.2,832.9 L550.2,835.5 L553.6,831.0 L556.8,834.5 L562.0,814.6 L565.9,814.6 L572.6,847.0 L576.6,852.8 L581.9,850.2 L585.9,851.5 L591.2,848.3 L597.3,847.8 L603.1,848.8 L607.1,850.4 L611.1,841.7 L617.7,843.0 L621.2,835.0 L624.9,839.0 L628.4,839.0 L632.4,843.0 L635.5,842.5 L639.0,838.5 L642.5,838.2 L648.3,835.5 L652.3,836.3 L658.9,819.6 L662.9,819.1 L670.9,811.6 L673.5,811.6 L680.2,820.4 L687.6,815.1 L690.8,817.7 L694.8,817.7 L698.8,823.1 L702.0,819.6 L705.4,821.2 L709.4,824.9 L712.6,824.4 L718.7,814.6 L722.2,815.1 L725.9,819.6 L728.5,819.1 L732.0,829.7 L739.2,823.9 L746.6,825.7 L750.6,822.3 L759.9,824.4 L763.9,828.9 L770.5,831.8 L774.5,835.5 L777.9,831.0 L783.8,830.2 L791.8,832.9 L798.4,829.2 L805.0,832.9 L809.0,827.0 L815.1,825.2 L818.9,814.3 L825.0,823.9 L829.0,825.7 L832.9,829.2 L836.9,829.7 L843.6,835.5 L846.2,834.5 L852.9,839.8 L856.9,831.8 L862.2,824.4 L867.5,813.8 L871.5,817.7 L878.1,817.0 L881.6,813.8 L885.3,806.3 L891.4,807.1 L895.4,820.4 L899.4,814.3 L906.0,819.6 L910.0,815.9 L914.0,805.8 L918.0,801.8 L923.3,797.8 L929.4,784.0 L936.6,793.8 L940.0,782.4 L943.2,785.9 L947.2,795.7 L950.6,799.9 L954.4,812.4 L957.8,813.2 L964.5,807.1 L968.4,812.4 L973.8,827.6 L977.7,826.5 L981.7,812.4 L985.7,821.2 L991.6,812.4 L995.0,814.3 L999.0,821.2 L1003.0,821.7 L1007.0,819.1 L1010.9,820.4 L1016.3,832.9 L1020.2,829.2 L1023.4,811.6 L1026.9,822.3 L1030.3,826.5 L1033.5,819.6 L1037.5,825.7 L1044.2,819.6 L1054.6,809.8 L1061.3,799.9 L1065.2,802.6 L1071.9,813.2 L1078.5,817.7 L1082.5,823.1 L1085.7,823.1 L1089.1,831.0 L1093.1,827.6 L1096.3,828.4 L1099.8,831.8 L1106.4,824.9 L1113.1,831.8 L1117.0,828.4 L1120.2,829.2 L1126.3,822.3 L1134.3,834.5 L1137.0,834.5 L1142.3,838.2 L1146.3,836.3 L1150.3,836.3 L1154.8,842.5 L1161.7,827.0 L1165.4,836.3 L1172.8,835.0 L1176.0,831.8 L1186.1,849.6 L1190.1,858.4 L1192.8,860.3 L1199.4,847.0 L1204.2,850.4 L1207.4,850.4 L1210.6,853.6 L1215.9,846.2 L1220.7,832.4 L1223.3,832.9 L1227.3,841.7 L1233.9,841.7 L1238.7,833.7 L1244.6,828.4 L1248.6,840.3 L1255.2,823.1 L1261.8,825.7 L1265.8,820.4 L1273.8,800.5 L1279.1,796.5 L1283.1,807.1 L1288.4,802.6 L1292.4,803.7 L1296.4,799.9 L1303.8,805.3 L1308.3,813.8 L1312.3,815.1 L1317.6,810.6 L1321.1,811.6 L1326.9,827.6 L1330.9,830.2 L1335.4,826.5 L1338.1,827.0 L1342.3,830.2 L1345.5,829.7 L1353.5,832.9 L1358.8,834.5 L1362.8,837.7 L1366.2,840.9 L1370.0,832.9 L1373.4,835.5 L1380.1,823.1 L1384.0,823.1 L1388.0,828.4 L1393.3,827.0 L1397.3,839.8 L1401.3,836.3 L1404.5,840.3 L1408.0,848.8 L1411.4,839.8 L1414.6,835.5 L1418.6,834.5 L1422.0,823.9 L1431.9,856.3 L1435.9,845.1 L1439.8,844.3 L1442.5,848.3 L1446.0,858.9 L1449.1,853.6 L1453.1,838.5 L1455.8,840.9 L1459.8,839.8 L1466.4,848.3 L1471.7,851.0 L1477.0,851.0 L1484.2,842.5 L1489.0,839.0 L1491.6,834.5 L1494.8,816.4 L1498.3,829.2 L1502.3,833.7 L1504.9,840.3 L1508.1,852.3 L1518.2,810.6 L1524.9,817.0 L1534.2,806.3 L1538.1,809.0 L1540.3,817.3 L1543.1,822.0 L1545.9,822.0 L1549.6,819.2 L1553.4,822.0 L1556.2,820.1 L1560.9,814.5 L1563.7,812.7 L1567.0,817.0 L1570.8,808.9 L1573.9,809.5 L1580.5,825.2 L1587.0,813.6 L1590.8,815.5 L1594.5,814.0 L1602.0,825.7 L1608.5,830.4 L1617.9,825.2 L1622.2,819.6 L1626.3,821.4 L1629.1,821.4 L1635.7,826.3 L1639.4,823.3 L1646.0,827.6 L1650.6,823.5 L1653.4,823.3 L1656.8,820.7 L1660.9,826.3 L1663.7,826.3 L1667.5,831.9 L1671.2,829.5 L1674.9,831.9 L1680.6,820.1 L1684.3,817.7 L1688.0,817.3 L1691.8,818.3 L1695.0,815.1 L1699.3,823.9 L1702.1,825.2 L1705.8,821.6 L1709.5,823.9 L1712.9,824.4 L1719.8,832.7 L1725.4,834.5 L1732.9,830.8 L1736.7,833.2 L1743.2,833.2 L1746.9,831.9 L1750.3,831.4 L1754.4,838.3 L1758.2,836.4 L1761.9,829.5 L1764.7,830.8 L1771.3,842.6 L1778.7,833.8 L1781.5,837.5 L1786.2,830.8 L1789.0,828.9 L1791.8,829.5 L1795.6,831.9 L1799.3,828.2 L1803.1,824.4" stroke="#a6dc72" stroke-width="1.1" fill="none" stroke-linejoin="round"/>
<rect x="114" y="153" width="101" height="15" fill="url(#hdr)" stroke="#0a0a0a" stroke-width="1"/>
<rect x="216" y="153" width="144" height="15" fill="url(#hdr)" stroke="#0a0a0a" stroke-width="1"/>
<rect x="114" y="168" width="247" height="27" fill="#343434"/>
<svg x="114" y="153" width="101" height="15" overflow="hidden"><g fill="none" stroke="#d0d0d0" stroke-width="1.0" stroke-linecap="square" ><path transform="translate(-7.30,0.80) scale(1.100,1.060)" d="M0.5,1.5H5 M1.5,1.5V9 M4,1.5V10 M1.5,4H4 M1.5,6.5H4 M0.5,9L4,8 M5.5,3H9Q8.5,7 5,10 M6,4Q7,8 9.8,10" vector-effect="non-scaling-stroke"/><path transform="translate(3.70,0.80) scale(1.220,1.060)" d="M1,1.5H4.5V4.5H1.5V7H4.5V9.5L3.5,9 M8,1V10" vector-effect="non-scaling-stroke"/><path transform="translate(15.90,0.80) scale(1.050,1.060)" d="M0.5,3.5H3.5 M2,1V9.5L1,9 M0.5,7L3.5,5.5 M5,1H8.8V3H5Z M5,4H8.8V8H5Z M5,5.4H8.8 M5,6.7H8.8 M5.8,8.5L4.5,10 M8,8.5L9.5,10" vector-effect="non-scaling-stroke"/><path transform="translate(26.40,0.80) scale(1.100,1.060)" d="M3,1L4,2.5 M7,1L6,2.5 M1,3H9 M3.5,3.5L1.5,6 M6.5,3.5L8.5,6 M2,6.5V9.5H8V6.5Z M4,6.5V9.5 M6,6.5V9.5 M0.5,9.5H9.5" vector-effect="non-scaling-stroke"/><path transform="translate(37.40,0.80) scale(0.450,1.060)" d="M9,0.5Q-1,5 9,10" vector-effect="non-scaling-stroke"/><path transform="translate(41.90,0.80) scale(1.100,1.060)" d="M1.5,10V1.5H8.5V9.5L7.5,10 M5,1.5V5.5 M1.5,5.5H8.5" vector-effect="non-scaling-stroke"/><path transform="translate(52.90,0.80) scale(1.100,1.060)" d="M0.5,3.5H3.5 M2,1V9.5L1,9 M0.5,7L3.5,5.5 M5.5,1L5,2.5H8L7.5,3.5 M5,3.5H9V6H5Z M4.5,7H9.8 M7,5Q6.5,9 4.5,10 M7.5,7.5L9.8,10" vector-effect="non-scaling-stroke"/><path transform="translate(63.90,0.80) scale(1.200,1.060)" d="M2,0.5L1,2 M2,1.2H4.5 M6.5,0.5L5.5,2 M6.5,1.2H9 M2.5,2.8H7.5V6.3H2.5Z M2.5,4H7.5 M2.5,5.2H7.5 M0.5,7.5H9.5 M3.5,6.3Q3.5,9 1.5,10 M6.5,6.3V10" vector-effect="non-scaling-stroke"/><path transform="translate(75.90,0.80) scale(0.500,1.060)" d="M1,0.5Q11,5 1,10" vector-effect="non-scaling-stroke"/></g></svg>
<g fill="none" stroke="#d0d0d0" stroke-width="1.0" stroke-linecap="square" ><path transform="translate(263.20,154.00) scale(1.185,1.050)" d="M1,1.5L2,2.5 M0.5,4.5L1.5,5.5 M0.5,9.5L2,7 M6,0.5L7,1.5 M3.5,2.5H9.5 M4,5.5H9 M3.5,9.5H9.5 M6.5,2.5V9.5" vector-effect="non-scaling-stroke"/><path transform="translate(275.05,154.00) scale(1.185,1.050)" d="M5,0.5V2 M1,2.5H9 M3,3Q5,8 9.5,10 M7,3Q5,8 0.5,10" vector-effect="non-scaling-stroke"/><path transform="translate(286.90,154.00) scale(1.185,1.050)" d="M2,1H8V10H2Z M2,5.5H8" vector-effect="non-scaling-stroke"/><path transform="translate(298.75,154.00) scale(1.185,1.050)" d="M0.5,2H3V8.5H0.5Z M0.5,5H3 M4,2.5H9 M6.5,0.5V4.5 M4,4.5H9.8 M4,6.5H9.8 M8,4.5V9.5H7 M5,7.5L6,8.5" vector-effect="non-scaling-stroke"/></g>
<text x="162" y="187" fill="#f0f0f0" font-size="14" textLength="49" lengthAdjust="spacingAndGlyphs">55,670</text>
<text x="223" y="187" fill="#f0f0f0" font-size="14" textLength="129" lengthAdjust="spacingAndGlyphs">2024/04/02 10:21</text>
<path d="M309.9,120.3 C308.5,120.6 304.7,121.5 301.5,121.9 C298.3,122.3 298.6,122.8 290.9,122.9 C283.1,123.0 265.1,122.4 255.0,122.4 C244.8,122.5 236.8,123.1 230.0,123.2 C223.2,123.3 218.8,122.9 214.4,123.2 C210.0,123.5 210.0,123.8 203.7,125.2 C197.3,126.6 185.9,129.0 176.3,131.3 C166.7,133.6 156.1,136.4 145.9,138.9 C135.8,141.4 122.5,144.8 115.4,146.5 C108.3,148.2 106.8,147.9 103.3,148.8 C99.8,149.8 96.2,150.3 94.6,152.2 C92.9,154.1 93.5,156.6 93.4,160.2 C93.3,163.8 93.0,170.1 94.1,173.9 C95.2,177.7 97.9,179.9 100.2,183.0 C102.5,186.1 105.0,188.6 107.8,192.2 C110.6,195.8 113.2,200.6 117.0,204.4 C120.8,208.2 125.9,211.4 130.7,215.0 C135.5,218.6 142.1,223.2 145.9,225.7 C149.7,228.2 150.5,229.3 153.5,230.2 C156.5,231.1 160.3,230.2 164.1,231.0 C167.9,231.8 169.2,233.2 176.3,234.8 C183.4,236.5 197.9,239.2 206.8,240.9 C215.7,242.6 222.9,243.8 229.6,244.7 C236.3,245.6 244.2,245.9 247.1,246.2" stroke="#fff200" stroke-width="3.3" fill="none" stroke-linecap="round" stroke-linejoin="round"/>
<path d="M239.1,238.6 C240.1,237.4 243.4,233.3 245.2,231.7 C247.0,230.0 244.7,229.6 249.8,228.7 C254.9,227.8 267.5,227.3 275.6,226.4 C283.7,225.5 292.1,224.4 298.5,223.4 C304.9,222.4 307.4,221.7 313.7,220.3 C320.0,218.9 328.9,216.9 336.5,215.0 C344.1,213.1 352.9,210.9 359.3,208.9 C365.7,206.9 370.5,204.6 374.6,202.8 C378.7,201.0 380.9,201.1 383.7,198.3 C386.5,195.5 389.0,190.2 391.3,186.1 C393.6,182.0 396.1,177.7 397.4,173.9 C398.7,170.1 399.4,167.1 398.9,163.3 C398.4,159.5 396.6,154.9 394.3,151.1 C392.0,147.3 389.8,143.9 385.2,140.4 C380.6,136.9 372.5,132.6 366.9,129.8 C361.3,127.0 356.0,125.6 351.7,123.7 C347.4,121.8 344.1,119.4 341.1,118.4 C338.1,117.4 334.8,117.7 333.5,117.6" stroke="#fff200" stroke-width="3.3" fill="none" stroke-linecap="round" stroke-linejoin="round"/>
<rect x="7.5" y="0.5" width="132" height="19.5" fill="#626262" stroke="#3a3a3a"/>
<rect x="9.5" y="1.5" width="128" height="16" fill="none" stroke="#c8c8c8" stroke-width="1" stroke-dasharray="1 1.5"/>
<circle cx="20.5" cy="10.5" r="7" fill="#e8e8e8"/><path d="M13.5,8h14M13.5,11h14M13.5,14h14" stroke="#d02020" stroke-width="1.5"/><path d="M13.6,10.5A7,7 0 0 1 20.5,3.5V10.5Z" fill="#3a4a9a"/>
<circle cx="37.5" cy="10.5" r="7" fill="#eeeeee"/><circle cx="37.5" cy="10.5" r="4" fill="#e01010"/>
<g fill="none" stroke="#ffffff" stroke-width="1.0" stroke-linecap="square" ><path transform="translate(51.50,4.00) scale(0.850,1.100)" d="M3,1V10 M3,5L7,7 M7,0.8l1,1.6 M9,0.5l1,1.6" vector-effect="non-scaling-stroke"/><path transform="translate(60.00,4.00) scale(0.850,1.100)" d="M3,2V6Q3,9 1,10 M6,1V9.5L10,6" vector-effect="non-scaling-stroke"/><path transform="translate(68.50,4.00) scale(0.550,1.100)" d="M7,1L3,10" vector-effect="non-scaling-stroke"/><path transform="translate(74.00,4.00) scale(1.200,1.100)" d="M1.5,10V1.5H8.5V9.5L7.5,10 M5,1.5V5.5 M1.5,5.5H8.5" vector-effect="non-scaling-stroke"/></g>
<rect x="140.5" y="0.5" width="19" height="19.5" fill="url(#btn)" stroke="#1a1a1a"/><path d="M145,8h9l-4.5,5z" fill="#fff"/>
<rect x="163.5" y="0.5" width="81" height="19.5" fill="#5e5e5e" stroke="#444"/>
<text x="172" y="14.6" fill="#ffffff" font-size="13" textLength="5.5" lengthAdjust="spacingAndGlyphs">5</text><path d="M230,8h9l-4.5,5z" fill="#fff"/>
<g fill="none" stroke="#ffffff" stroke-width="1.0" stroke-linecap="square" ><path transform="translate(177.60,4.60) scale(1.130,1.000)" d="M4,1L1,5 M6,1L9.5,5 M2.5,5.5H8V9.5L6.8,10 M5,5.5Q5,9 2,10" vector-effect="non-scaling-stroke"/><path transform="translate(188.90,4.60) scale(1.200,1.000)" d="M2.5,1.5H7.5V4.5H2.5Z M5,4.5V9 M5,7H8 M3,6Q3,9 1,10 M3.5,8.5Q6,10 9.5,10" vector-effect="non-scaling-stroke"/></g>
<rect x="248.5" y="0.5" width="92" height="18" rx="3" fill="url(#btn)" stroke="#1a1a1a" stroke-width="1"/>
<g fill="none" stroke="#ffffff" stroke-width="1.0" stroke-linecap="square" ><path transform="translate(254.60,4.00) scale(0.987,1.100)" d="M2,1.5H8 M1,4.5H9 M5,4.5V7Q5,9.5 2.5,10" vector-effect="non-scaling-stroke"/><path transform="translate(264.47,4.00) scale(0.987,1.100)" d="M4,1Q3,4 1,6 M4,2.5H9Q8,8 3,10" vector-effect="non-scaling-stroke"/><path transform="translate(274.34,4.00) scale(0.987,1.100)" d="M2,2.5H8 M1,8.5H9" vector-effect="non-scaling-stroke"/><path transform="translate(284.21,4.00) scale(0.987,1.100)" d="M1,3.5H8.5V8Q8.5,10 6.5,9.5 M5,1Q5,7 1.5,10" vector-effect="non-scaling-stroke"/><path transform="translate(294.08,4.00) scale(0.987,1.100)" d="M3,2V6Q3,9 1,10 M6,1V9.5L10,6" vector-effect="non-scaling-stroke"/><path transform="translate(303.95,4.00) scale(0.987,1.100)" d="M3,1H5V2.5H3V3.5H5 M6,1H8V2.5H6V3.5H8 M3,5H9 M4.5,4.5V7 M7.5,4.5V7 M3,6.5H9.5 M4.5,7.5L3.5,8.5 M7.5,7.5L8.5,8.5 M0.5,1.5L1.5,2.5 M0.5,5H1.8V8L0.5,9 M1.8,8.5Q3,10 9.8,10" vector-effect="non-scaling-stroke"/><path transform="translate(313.82,4.00) scale(0.987,1.100)" d="M0.5,3.5H3.5 M2,1V9.5L1,9 M0.5,7L3.5,5.5 M5,1.5H9V4.5H5 M5,1.5V6Q5,9 4,10 M6.5,4.5Q7,8 9.8,10" vector-effect="non-scaling-stroke"/></g><path d="M329,8.6h7l-3.5,3.6z" fill="#fff"/>
<rect x="345.5" y="0.5" width="23" height="18" rx="3" fill="url(#btn)" stroke="#1a1a1a" stroke-width="1"/>
<path d="M350,15l2,-4 7,-7 2,2 -7,7z" fill="#4a90e0"/>
<rect x="373.5" y="0.5" width="23" height="18" rx="3" fill="url(#btn)" stroke="#1a1a1a" stroke-width="1"/>
<circle cx="385" cy="9.5" r="6" fill="#f0f0f0"/><rect x="384" y="8" width="2" height="5" fill="#111"/><rect x="384" y="5" width="2" height="1.8" fill="#111"/>
<rect x="401.5" y="0.5" width="23" height="18" rx="3" fill="url(#btn)" stroke="#1a1a1a" stroke-width="1"/>
<path d="M405,14 L410,10 413,11 417,7 420,10 421,9 423,14Z" fill="#f0f0f0"/>
<rect x="429.5" y="0.5" width="57" height="18" rx="3" fill="url(#btn)" stroke="#1a1a1a" stroke-width="1"/>
<rect x="430" y="1" width="28" height="17" rx="2" fill="url(#btnb)"/>
<text x="443.5" y="14.5" text-anchor="middle" fill="#e8f4ff" font-size="13">Bid</text><text x="472.5" y="14.5" text-anchor="middle" fill="#ffffff" font-size="13">Ask</text>
<rect x="491.5" y="0.5" width="24" height="18" rx="3" fill="url(#btn)" stroke="#1a1a1a" stroke-width="1"/>
<path d="M495.5,6V4.5h16V6 M495.5,13v1.5h16V13" stroke="#3a86d8" fill="none"/><path d="M499,9v4M502,7v6M505,8v5M508,6v6" stroke="#3a86d8" stroke-width="1.3"/>
<rect x="519.5" y="0.5" width="23" height="18" rx="3" fill="url(#btn)" stroke="#1a1a1a" stroke-width="1"/>
<circle cx="534" cy="7.5" r="4.5" fill="none" stroke="#eee" stroke-width="1.4"/><path d="M537,11l3,3" stroke="#eee" stroke-width="1.8"/><path d="M532,7.5h4" stroke="#eee" stroke-width="1.2"/><path d="M523.5,10v7M521.5,12h4M521.5,15h4" stroke="#eee" stroke-width="1"/>
<rect x="547.5" y="0.5" width="23" height="18" rx="3" fill="url(#btn)" stroke="#1a1a1a" stroke-width="1"/>
<circle cx="562" cy="7.5" r="4.5" fill="none" stroke="#eee" stroke-width="1.4"/><path d="M565,11l3,3" stroke="#eee" stroke-width="1.8"/><path d="M560,7.5h4M562,5.5v4" stroke="#eee" stroke-width="1.2"/><path d="M551.5,10v7M550,11.5l1.5,-1.5 1.5,1.5M550,15.5l1.5,1.5 1.5,-1.5" stroke="#eee" stroke-width="1" fill="none"/>
<rect x="7.5" y="30.5" width="21" height="21" fill="url(#btn)" stroke="#111"/>
<path d="M11,40.5h14M18,33.5v14" stroke="#f2f2f2" stroke-width="1.3"/>
<rect x="35.5" y="30.5" width="21" height="21" fill="url(#btn)" stroke="#111"/>
<path d="M40,47L52,36" stroke="#f2f2f2" stroke-width="1.3"/><text x="38.5" y="39" fill="#f2f2f2" font-size="7" font-weight="bold">1</text>
<rect x="60.5" y="30.5" width="21" height="21" fill="url(#btn)" stroke="#111"/>
<path d="M65,47L77,36" stroke="#f2f2f2" stroke-width="1.3"/><text x="63.5" y="39" fill="#f2f2f2" font-size="7" font-weight="bold">2</text>
<rect x="85.5" y="30.5" width="21" height="21" fill="url(#btn)" stroke="#111"/>
<path d="M90,47L102,36" stroke="#f2f2f2" stroke-width="1.3"/><text x="88.5" y="39" fill="#f2f2f2" font-size="7" font-weight="bold">3</text>
<rect x="110.5" y="30.5" width="21" height="21" fill="url(#btn)" stroke="#111"/>
<path d="M114,44L124,34L128,38L118,48Z" fill="#f2f2f2"/><path d="M118,43l2,2M120,41l2,2M122,39l2,2M124,37l2,2" stroke="#222" stroke-width="0.8"/>
<rect x="135.5" y="30.5" width="21" height="21" fill="url(#btn)" stroke="#111"/>
<path d="M140,36.5h12M140,40.5h12M140,44.5h12" stroke="#f2f2f2" stroke-width="1.3"/>
<rect x="160.5" y="30.5" width="21" height="21" fill="url(#btn)" stroke="#111"/>
<path d="M164,34.5h14M164,37.5h14M164,40.5h14M164,43.5h14M164,46.5h14" stroke="#f2f2f2" stroke-width="1.1"/>
<rect x="185.5" y="30.5" width="21" height="21" fill="url(#btn)" stroke="#111"/>
<path d="M188.5,44A7.5,7.5 0 0 1 203.5,44 M191,44A5,5 0 0 1 201,44 M194,45L202,36" stroke="#f2f2f2" stroke-width="1" fill="none"/>
<rect x="210.5" y="30.5" width="21" height="21" fill="url(#btn)" stroke="#111"/>
<path d="M214,33V48H229 M215,47L220,34 M215,47L227,35 M215,47L227,41" stroke="#f2f2f2" stroke-width="1" fill="none"/>
<rect x="235.5" y="30.5" width="21" height="21" fill="url(#btn)" stroke="#111"/>
<path d="M239.5,35v12M242.5,35v12M245.5,35v12M248.5,35v12M251.5,35v12" stroke="#f2f2f2" stroke-width="1.1"/>
<rect x="260.5" y="30.5" width="21" height="21" fill="url(#btn)" stroke="#111"/>
<path d="M264,48L270,34 M264,48L278,35 M264,48L278,41" stroke="#f2f2f2" stroke-width="1" fill="none"/>
<rect x="285.5" y="30.5" width="21" height="21" fill="url(#btn)" stroke="#111"/>
<path d="M296,34L303,39L300.5,47H291.5L289,39Z" stroke="#f2f2f2" stroke-width="1.1" fill="none"/>
<rect x="310.5" y="30.5" width="21" height="21" fill="url(#btn)" stroke="#111"/>
<circle cx="321" cy="40.5" r="6" stroke="#f2f2f2" stroke-width="1.1" fill="none"/>
<rect x="335.5" y="30.5" width="21" height="21" fill="url(#btn)" stroke="#111"/>
<rect x="339.5" y="35.5" width="13" height="10" stroke="#f2f2f2" stroke-width="1.2" fill="none"/>
<rect x="360.5" y="30.5" width="21" height="21" fill="url(#btn)" stroke="#111"/>
<path d="M363,40.5h16" stroke="#f2f2f2" stroke-width="1.3"/>
<rect x="385.5" y="30.5" width="21" height="21" fill="url(#btn)" stroke="#111"/>
<path d="M396,34v13" stroke="#f2f2f2" stroke-width="1.3"/>
<rect x="410.5" y="30.5" width="21" height="21" fill="url(#btn)" stroke="#111"/>
<text x="421" y="47" text-anchor="middle" fill="#f2f2f2" font-size="16" font-weight="bold">A</text>
<rect x="435.5" y="30.5" width="21" height="21" fill="url(#btn)" stroke="#111"/>
<circle cx="446" cy="38" r="4.5" fill="#f2f2f2"/><circle cx="444.2" cy="37" r="0.9" fill="#222"/><circle cx="447.8" cy="37" r="0.9" fill="#222"/><path d="M444,39.3q2,2 4,0" stroke="#222" stroke-width="0.8" fill="none"/><text x="446" y="49" text-anchor="middle" fill="#f2f2f2" font-size="6" font-weight="bold">ICON</text>
<rect x="463.5" y="30.5" width="21" height="21" fill="url(#btn)" stroke="#111"/>
<circle cx="472" cy="38" r="4.5" fill="#555"/><path d="M480,41v5h-6M476,44l-2,2 2,2" stroke="#666" stroke-width="1.4" fill="none"/>
<rect x="488.5" y="30.5" width="21" height="21" fill="url(#btn)" stroke="#111"/>
<rect x="493" y="35" width="8" height="9" stroke="#5a5a5a" fill="none"/><rect x="497" y="38" width="8" height="9" stroke="#5a5a5a" fill="#222"/>
<rect x="513.5" y="30.5" width="21" height="21" fill="url(#btn)" stroke="#111"/>
<path d="M520,47V38h2v5V35h2v8V34h2v9V35h2v8v-4h2v8l-2,2h-8z" stroke="#5a5a5a" fill="none"/>
<rect x="538.5" y="30.5" width="21" height="21" fill="url(#btn)" stroke="#111"/>
<path d="M543.5,47L550.5,40" stroke="#5c5c5c" stroke-width="2.6" stroke-linecap="round"/><circle cx="552.5" cy="38" r="3.8" fill="#5c5c5c"/><rect x="553" y="34" width="3" height="3.4" fill="#1e1e1e" transform="rotate(45 554.5 35.7)"/>
<rect x="563.5" y="30.5" width="21" height="21" fill="url(#btnb)" stroke="#111"/>
<path d="M567,43L575,35L581,41L573,49Z" stroke="#f2f2f2" stroke-width="1.3" fill="none"/><path d="M570,40L576,46" stroke="#f2f2f2" stroke-width="1"/>
<rect x="588.5" y="30.5" width="21" height="21" fill="url(#btn)" stroke="#111"/>
<path d="M592.5,44L598,38.5" stroke="#f2f2f2" stroke-width="2.6" stroke-linecap="round"/><circle cx="599.5" cy="36.5" r="3.5" fill="#f2f2f2"/><rect x="600" y="32.8" width="2.8" height="3.2" fill="#2a2a2a" transform="rotate(45 601.4 34.4)"/><path d="M602,43.5h5M602,45.7h5M602,47.9h5M600.3,43.5h1M600.3,45.7h1M600.3,47.9h1" stroke="#f2f2f2" stroke-width="1.2"/>
<rect x="613.5" y="30.5" width="21" height="21" fill="url(#btn)" stroke="#111"/>
<g transform="translate(625,39.5) rotate(45)"><path d="M-3.8,5.5V-0.5A3.8,3.8 0 0 1 3.8,-0.5V5.5" stroke="#f2f2f2" stroke-width="3.4" fill="none"/><path d="M-3.8,5.5V-0.5A3.8,3.8 0 0 1 3.8,-0.5V5.5" stroke="#151515" stroke-width="1.2" fill="none"/><rect x="-5.5" y="4" width="3.4" height="2.6" fill="#f2f2f2"/><rect x="2.1" y="4" width="3.4" height="2.6" fill="#f2f2f2"/></g>
</svg></body></html>
